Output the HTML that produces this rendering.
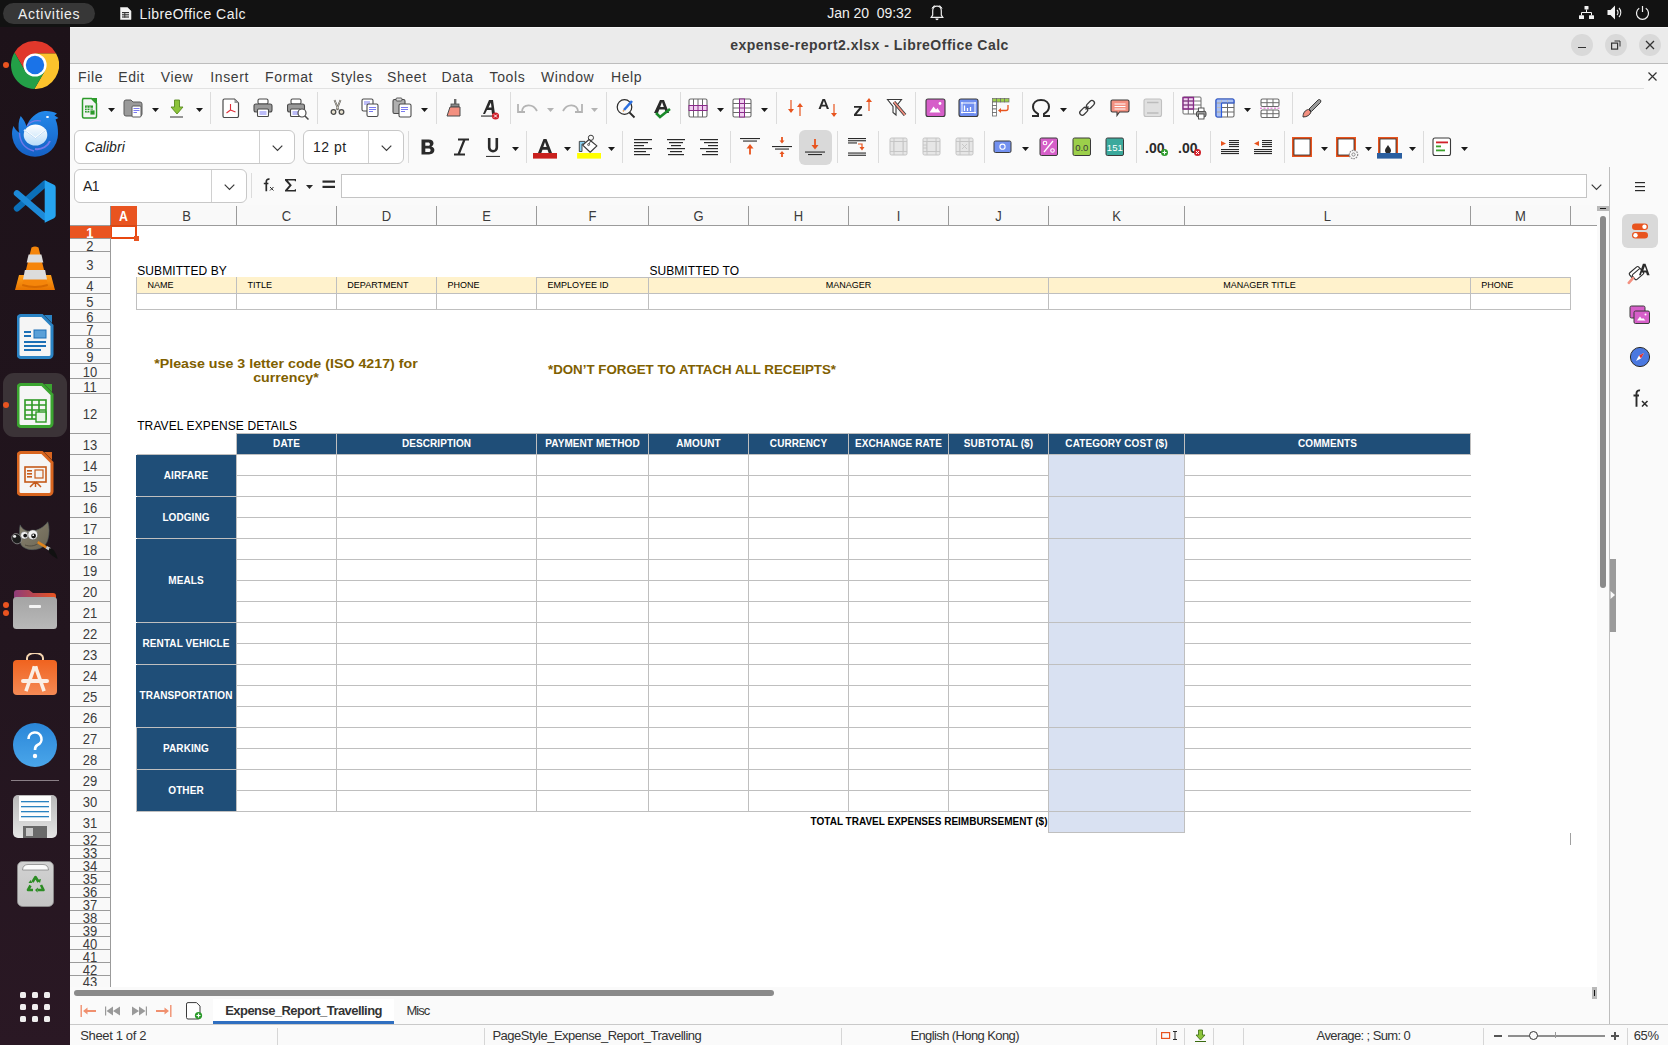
<!DOCTYPE html><html><head><meta charset="utf-8"><style>html,body{margin:0;padding:0;}body{width:1668px;height:1045px;overflow:hidden;position:relative;background:#fafafa;font-family:"Liberation Sans",sans-serif;}</style></head><body>
<div style="position:absolute;left:0px;top:0px;width:1668px;height:27px;background:#121212"></div>
<div style="position:absolute;left:3px;top:3px;width:92px;height:21px;background:#373737;border-radius:11px"></div>
<div style="position:absolute;left:18px;top:7.15px;font:normal normal 14px/14px 'Liberation Sans',sans-serif;color:#f0f0f0;letter-spacing:0.7px;white-space:nowrap;">Activities</div>
<svg style="position:absolute;left:119px;top:7px" width="13" height="13" viewBox="0 0 13 13"><path d="M1.5 0.5h7l3.5 3.5v8.5h-10.5z" fill="#f4f4f4" stroke="#ddd" stroke-width="0.6"/><g fill="#333"><rect x="3" y="5" width="7" height="1.2"/><rect x="3" y="7.2" width="7" height="1.2"/><rect x="3" y="9.4" width="7" height="1.2"/><rect x="5.3" y="5" width="1" height="5.6"/></g></svg>
<div style="position:absolute;left:139.4px;top:7.15px;font:normal normal 14px/14px 'Liberation Sans',sans-serif;color:#f0f0f0;letter-spacing:0.45px;white-space:nowrap;">LibreOffice Calc</div>
<div style="position:absolute;left:827.3px;top:6.15px;font:normal normal 14px/14px 'Liberation Sans',sans-serif;color:#f0f0f0;letter-spacing:-0.05px;white-space:nowrap;">Jan 20&nbsp;&nbsp;09:32</div>
<svg style="position:absolute;left:930px;top:4px" width="14" height="18" viewBox="0 0 14 18"><path d="M7 2.2c-2.6 0-4.3 2-4.3 4.6v4.3L1.2 13.4h11.6l-1.5-2.3V6.8C11.3 4.2 9.6 2.2 7 2.2z" fill="none" stroke="#eee" stroke-width="1.2"/><path d="M5.4 14.6h3.2a1.6 1.6 0 0 1-3.2 0z" fill="#eee"/><path d="M2 4.5a6 6 0 0 1 2.5-3M12 4.5a6 6 0 0 0-2.5-3" fill="none" stroke="#eee" stroke-width="1"/></svg>
<svg style="position:absolute;left:1579px;top:6px" width="15" height="13" viewBox="0 0 15 13"><g fill="#f2f2f2"><rect x="5.5" y="0" width="4" height="3.5" rx="0.6"/><rect x="0" y="9.3" width="5" height="3.7" rx="0.6"/><rect x="10" y="9.3" width="5" height="3.7" rx="0.6"/></g><path d="M7.5 3.5v3M2.5 9.3V6.5h10v2.8" fill="none" stroke="#f2f2f2" stroke-width="1"/></svg>
<svg style="position:absolute;left:1607px;top:5px" width="16" height="15" viewBox="0 0 16 15"><path d="M0.5 5h3l4.5-4.5v14L3.5 10h-3z" fill="#f2f2f2"/><path d="M10 5a3.5 3.5 0 0 1 0 5M12 3a6.5 6.5 0 0 1 0 9" fill="none" stroke="#f2f2f2" stroke-width="1.1"/></svg>
<svg style="position:absolute;left:1635px;top:5px" width="15" height="15" viewBox="0 0 15 15"><path d="M4.2 3.3a6 6 0 1 0 6.6 0" fill="none" stroke="#f2f2f2" stroke-width="1.2"/><path d="M7.5 1v6" stroke="#f2f2f2" stroke-width="1.2"/></svg>
<div style="position:absolute;left:0;top:27px;width:70px;height:1018px;background:linear-gradient(180deg,#1d1219 0%,#22151e 60%,#2a1824 100%)"></div>
<svg style="position:absolute;left:11px;top:41px" width="48" height="48" viewBox="0 0 48 48"><path d="M3.51 11.5 A24 24 0 0 1 45.07 12.5 L24 12.5 L24 24 L14.04 29.75Z" fill="#e0382b"/>
<path d="M45.07 12.5 A24 24 0 0 1 23.4 48 L33.96 29.75 L24 24 L24 12.5Z" fill="#fcc32c"/>
<path d="M23.4 48 A24 24 0 0 1 3.51 11.5 L14.04 29.75 L24 24 L33.96 29.75Z" fill="#23a047"/>
<circle cx="24" cy="24" r="11.6" fill="#fff"/><circle cx="24" cy="24" r="9.2" fill="#1a73e8"/></svg>
<div style="position:absolute;left:3px;top:62px;width:6px;height:6px;border-radius:3px;background:#e95420"></div>
<svg style="position:absolute;left:11px;top:110px" width="48" height="47" viewBox="0 0 48 47"><defs><linearGradient id="tb" x1="0" y1="0" x2="0" y2="1"><stop offset="0" stop-color="#2389ea"/><stop offset="1" stop-color="#1560c4"/></linearGradient><linearGradient id="env" x1="0" y1="0" x2="0" y2="1"><stop offset="0" stop-color="#ffffff"/><stop offset="1" stop-color="#b9dcf8"/></linearGradient></defs>
<path d="M24 46.8 A23 23 0 0 1 1 24 C1 21 1.5 18.5 2.5 16 C4 19 5.5 21 8 22.5 C7 16 7.5 10.5 9.7 5.9 C12.5 9 14.5 12.5 15.5 16.5 C18 9 25 1.5 34 1 C39 0.8 43 2 46 3.5 L43.5 5.5 L47.5 8 L44.5 9.5 C46.5 13.5 47 18.5 47 24 A23 23 0 0 1 24 46.8Z" fill="url(#tb)"/>
<ellipse cx="36.5" cy="7" rx="1.5" ry="1" fill="#fff"/>
<path d="M16 16 C19 12 24 10 30 11" stroke="#8e7ce8" stroke-width="1.2" fill="none" opacity="0.8"/>
<path d="M8.5 23 C9 33 15 39 23 41" stroke="#8b7df0" stroke-width="1.4" fill="none" opacity="0.75"/>
<ellipse cx="24.5" cy="25" rx="11.8" ry="10.5" fill="url(#env)"/>
<path d="M13 20 L24.5 28 L35 20" stroke="#ffffff" stroke-width="1.6" fill="none"/>
<path d="M13.5 20.5 L24.5 28.5 L34.5 20.5" stroke="#9cc8f0" stroke-width="0.7" fill="none"/>
<path d="M24 39 C31 40 37 36 39 31" stroke="#8b7df0" stroke-width="2" fill="none" opacity="0.8"/></svg>
<svg style="position:absolute;left:13px;top:180px" width="44" height="43" viewBox="0 0 44 43"><path d="M4 28.3 L31.7 4" stroke="#0b6fb8" stroke-width="6.4" stroke-linecap="round"/>
<path d="M4 13.4 L31.7 37" stroke="#1d8ad8" stroke-width="6.4" stroke-linecap="round"/>
<path d="M31.7 0.3 L41 4.8 Q42.7 5.6 42.7 7.5 V35.5 Q42.7 37.4 41 38.2 L31.7 42.7Z" fill="#26a4f0"/></svg>
<svg style="position:absolute;left:15px;top:246px" width="40" height="46" viewBox="0 0 40 46"><defs><linearGradient id="vb" x1="0" y1="0" x2="0" y2="1"><stop offset="0" stop-color="#ffa01a"/><stop offset="1" stop-color="#e87400"/></linearGradient></defs>
<path d="M4 29 H36 L40 44 H0Z" fill="url(#vb)"/>
<path d="M16.5 1.5 Q20 -0.5 23.5 1.5 L32.5 38 Q20 42 7.5 38Z" fill="#f5850a"/>
<path d="M13.6 8.5 H26.4 L28.3 16.5 H11.7Z" fill="#dcdcdc"/>
<path d="M9.9 24 H30.1 L32 33.5 H8Z" fill="#dcdcdc"/>
<path d="M7.5 38 Q20 42 32.5 38 L33 40 Q20 44 7 40Z" fill="#d86a00"/></svg>
<svg style="position:absolute;left:17px;top:314px" width="37" height="45" viewBox="0 0 37 45"><path d="M4 1.5 h21 l10 10 v29 a3 3 0 0 1 -3 3 h-28 a3 3 0 0 1 -3 -3 v-36 a3 3 0 0 1 3 -3z" fill="#f5f5f5" stroke="#2a83c4" stroke-width="3"/>
<path d="M27 1 h8 v8z" fill="#2a83c4"/><g fill="#1c6fb5"><rect x="7" y="17" width="7" height="2"/><rect x="7" y="21" width="7" height="2"/><rect x="7" y="27" width="22" height="2"/><rect x="7" y="31" width="22" height="2"/><rect x="7" y="35" width="17" height="2"/></g><rect x="17" y="16" width="12" height="8" fill="#5aa0d8" stroke="#1c6fb5"/></svg>
<div style="position:absolute;left:3px;top:373px;width:64px;height:64px;background:#3b3337;border-radius:11px"></div>
<svg style="position:absolute;left:17px;top:383px" width="37" height="45" viewBox="0 0 37 45"><path d="M4 1.5 h21 l10 10 v29 a3 3 0 0 1 -3 3 h-28 a3 3 0 0 1 -3 -3 v-36 a3 3 0 0 1 3 -3z" fill="#f5f5f5" stroke="#3ba530" stroke-width="3"/>
<path d="M27 1 h8 v8z" fill="#3ba530"/><g fill="none" stroke="#2f9a26" stroke-width="1.6"><rect x="8" y="17" width="21" height="19"/><path d="M8 22h21M8 27h21M8 32h21M15 17v19M22 17v19"/></g><rect x="19" y="29" width="10" height="10" fill="#e8f5e6" stroke="#2f9a26" stroke-width="1.4"/></svg>
<div style="position:absolute;left:3px;top:402px;width:6px;height:6px;border-radius:3px;background:#e95420"></div>
<svg style="position:absolute;left:17px;top:451px" width="37" height="45" viewBox="0 0 37 45"><path d="M4 1.5 h21 l10 10 v29 a3 3 0 0 1 -3 3 h-28 a3 3 0 0 1 -3 -3 v-36 a3 3 0 0 1 3 -3z" fill="#f5f5f5" stroke="#d8651f" stroke-width="3"/>
<path d="M27 1 h8 v8z" fill="#d8651f"/><rect x="8" y="16" width="21" height="15" fill="none" stroke="#c55a1a" stroke-width="1.6"/><g fill="#c55a1a"><rect x="10" y="19" width="5" height="1.6"/><rect x="10" y="22" width="5" height="1.6"/><rect x="10" y="25" width="5" height="1.6"/></g><rect x="18" y="19" width="8" height="8" fill="none" stroke="#c55a1a" stroke-width="1.2"/><path d="M18 31 l-5 5 M18.5 31 v5 M19 31 l5 5" stroke="#c55a1a" stroke-width="1.5"/></svg>
<svg style="position:absolute;left:11px;top:518px" width="48" height="42" viewBox="0 0 48 42"><defs><linearGradient id="gh" x1="0" y1="0" x2="1" y2="1"><stop offset="0" stop-color="#8a8470"/><stop offset="1" stop-color="#6a6454"/></linearGradient></defs>
<path d="M9.2 6.9 C11 11 15 13.5 19.8 13.2 C27 12.8 33 9 36.8 3.8 C38.5 9 38.5 16 37 21 C36 26 32 30.5 24 31.6 C17 32 12 30 10 26.4 C8.5 22 8 12 9.2 6.9Z" fill="url(#gh)" stroke="#4e5a5a" stroke-width="0.6"/>
<path d="M14 27 C18 28.5 23 28.5 27 25.5" stroke="#4a4538" stroke-width="0.8" fill="none"/>
<ellipse cx="5.6" cy="20.7" rx="4.6" ry="5.4" transform="rotate(-35 5.6 20.7)" fill="#1c1c1c" stroke="#9a9a9a" stroke-width="0.7"/>
<ellipse cx="3.6" cy="18.4" rx="1.6" ry="1.4" fill="#f0f0f0"/>
<circle cx="13.4" cy="17.3" r="3.8" fill="#f2f2f2" stroke="#555" stroke-width="0.5"/><circle cx="14.2" cy="17.6" r="1.9" fill="#151515"/>
<circle cx="21.8" cy="16.8" r="4.9" fill="#f2f2f2" stroke="#555" stroke-width="0.5"/><circle cx="22.6" cy="18" r="2.4" fill="#151515"/><circle cx="22.2" cy="17.2" r="0.9" fill="#fff"/>
<path d="M26.7 24.1 L35.3 29.3" stroke="#e0841c" stroke-width="2.6"/>
<path d="M35.3 29.3 L39.4 31.6" stroke="#c8c8c8" stroke-width="3"/>
<path d="M38.5 30 C43 31 45.5 35 46.5 41 C42 38.5 38 35.5 37.5 33Z" fill="#111"/></svg>
<svg style="position:absolute;left:12px;top:589px" width="46" height="40" viewBox="0 0 46 40"><defs><linearGradient id="fo" x1="0" y1="0" x2="1" y2="0"><stop offset="0" stop-color="#8e3c7a"/><stop offset="1" stop-color="#e95420"/></linearGradient><linearGradient id="fg" x1="0" y1="0" x2="0" y2="1"><stop offset="0" stop-color="#a4a4a4"/><stop offset="1" stop-color="#b9b9b9"/></linearGradient></defs>
<path d="M2 4 a3 3 0 0 1 3 -3 h12 l4 3 h20 a3 3 0 0 1 3 3 v6 h-42z" fill="url(#fo)"/>
<rect x="1" y="8" width="44" height="32" rx="3.5" fill="url(#fg)"/><rect x="17" y="16" width="12" height="3" rx="1" fill="#f4f4f4"/></svg>
<div style="position:absolute;left:3px;top:602px;width:6px;height:6px;border-radius:3px;background:#e95420"></div>
<div style="position:absolute;left:3px;top:610px;width:6px;height:6px;border-radius:3px;background:#e95420"></div>
<svg style="position:absolute;left:12px;top:653px" width="46" height="42" viewBox="0 0 46 42"><defs><linearGradient id="ac" x1="0" y1="0" x2="0" y2="1"><stop offset="0" stop-color="#f0631f"/><stop offset="1" stop-color="#f58a55"/></linearGradient></defs>
<path d="M15 8 v-3 a8 5 0 0 1 16 0 v3" fill="none" stroke="#f5d5b0" stroke-width="2"/>
<rect x="1" y="7" width="44" height="35" rx="4" fill="url(#ac)"/>
<path d="M14.5 36.5 L22 15 M24 15 L31.5 36.5" stroke="#fbeee4" stroke-width="3.6" stroke-linecap="square"/><rect x="20.5" y="13.5" width="5" height="3" fill="#fbeee4"/><rect x="9" y="26" width="28" height="4" rx="2" fill="#fbeee4"/></svg>
<svg style="position:absolute;left:12px;top:722px" width="46" height="46" viewBox="0 0 46 46"><defs><linearGradient id="hp" x1="0" y1="0" x2="0" y2="1"><stop offset="0" stop-color="#2a86d8"/><stop offset="1" stop-color="#4aa6ea"/></linearGradient></defs>
<circle cx="23" cy="23" r="22" fill="url(#hp)"/>
<path d="M16.5 17 a6.5 6.5 0 1 1 9 6 c-2 1 -2.5 2.5 -2.5 5" fill="none" stroke="#fff" stroke-width="2.6"/><circle cx="23" cy="34" r="2.2" fill="#fff"/></svg>
<div style="position:absolute;left:11px;top:780px;width:48px;height:1px;background:#8a7f86"></div>
<svg style="position:absolute;left:12px;top:794px" width="46" height="45" viewBox="0 0 46 45"><defs><linearGradient id="fl" x1="0" y1="0" x2="0" y2="1"><stop offset="0" stop-color="#b9b9b9"/><stop offset="1" stop-color="#e6e6e6"/></linearGradient></defs>
<rect x="1" y="1" width="44" height="43" rx="5" fill="url(#fl)"/><rect x="7" y="2" width="32" height="25" fill="#fdfdfd"/>
<g fill="#2a82c0"><rect x="9" y="7" width="28" height="1.3"/><rect x="9" y="12" width="28" height="1.3"/><rect x="9" y="17" width="28" height="1.3"/><rect x="9" y="22" width="28" height="1.3"/></g>
<rect x="11" y="32" width="24" height="12" fill="#6a6a6a"/><rect x="14" y="34" width="7" height="8" fill="#c9c9c9"/></svg>
<svg style="position:absolute;left:17px;top:861px" width="37" height="46" viewBox="0 0 37 46"><defs><linearGradient id="tr" x1="0" y1="0" x2="0" y2="1"><stop offset="0" stop-color="#d2d2d2"/><stop offset="1" stop-color="#c4c4c4"/></linearGradient></defs>
<rect x="0.5" y="0.5" width="36" height="45" rx="5" fill="url(#tr)" stroke="#8e8e8e" stroke-width="0.8"/>
<path d="M5.5 9 Q6 3.5 11 3.5 H26 Q31 3.5 31.5 9Z" fill="#fbfbfb" stroke="#7a7a7a" stroke-width="0.7"/>
<g fill="none" stroke="#2c8c24" stroke-width="2.6" stroke-linejoin="round">
<path d="M15.5 21 L18.5 16 L21.5 21"/><path d="M24 24 L26.5 29 H21"/><path d="M16 29 H11 L13.5 24.5"/></g>
<g fill="#2c8c24"><path d="M20 19 l4 -1 l-1 4z"/><path d="M20.5 31.5 l-2.5 -2.5 l3 -2.5z"/><path d="M11.5 22 l2 -3 l2 3z"/></g></svg>
<div style="position:absolute;left:20px;top:992px;width:6px;height:6px;background:#eeeeee;border-radius:1.5px"></div>
<div style="position:absolute;left:20px;top:1004px;width:6px;height:6px;background:#eeeeee;border-radius:1.5px"></div>
<div style="position:absolute;left:20px;top:1016px;width:6px;height:6px;background:#eeeeee;border-radius:1.5px"></div>
<div style="position:absolute;left:32px;top:992px;width:6px;height:6px;background:#eeeeee;border-radius:1.5px"></div>
<div style="position:absolute;left:32px;top:1004px;width:6px;height:6px;background:#eeeeee;border-radius:1.5px"></div>
<div style="position:absolute;left:32px;top:1016px;width:6px;height:6px;background:#eeeeee;border-radius:1.5px"></div>
<div style="position:absolute;left:44px;top:992px;width:6px;height:6px;background:#eeeeee;border-radius:1.5px"></div>
<div style="position:absolute;left:44px;top:1004px;width:6px;height:6px;background:#eeeeee;border-radius:1.5px"></div>
<div style="position:absolute;left:44px;top:1016px;width:6px;height:6px;background:#eeeeee;border-radius:1.5px"></div>
<div style="position:absolute;left:70px;top:27px;width:1598px;height:1px;background:#f6f6f6"></div>
<div style="position:absolute;left:70px;top:28px;width:1598px;height:35px;background:#ebebeb"></div>
<div style="position:absolute;left:70px;top:63px;width:1598px;height:1px;background:#bdbdbd"></div>
<div style="position:absolute;left:700px;width:339px;top:38.15px;text-align:center;font:normal bold 14px/14px 'Liberation Sans',sans-serif;color:#3d3d3d;letter-spacing:0.48px;white-space:nowrap;">expense-report2.xlsx - LibreOffice Calc</div>
<div style="position:absolute;left:1571px;top:34px;width:22px;height:22px;background:#d9d9d9;border-radius:11px"></div>
<div style="position:absolute;left:1605px;top:34px;width:22px;height:22px;background:#d9d9d9;border-radius:11px"></div>
<div style="position:absolute;left:1639px;top:34px;width:22px;height:22px;background:#d9d9d9;border-radius:11px"></div>
<div style="position:absolute;left:1578px;top:47px;width:8px;height:1.2px;background:#333"></div>
<svg style="position:absolute;left:1611px;top:40px" width="10" height="10" viewBox="0 0 10 10"><rect x="0.6" y="3.1" width="6" height="6" fill="none" stroke="#333" stroke-width="1.2"/><path d="M3.5 1 h5.5 v5.5" fill="none" stroke="#333" stroke-width="1"/></svg>
<svg style="position:absolute;left:1645px;top:40px" width="10" height="10" viewBox="0 0 10 10"><path d="M1 1 L9 9 M9 1 L1 9" stroke="#333" stroke-width="1.3"/></svg>
<div style="position:absolute;left:70px;top:64px;width:1598px;height:24px;background:#fafafa"></div>
<div style="position:absolute;left:70px;top:88px;width:1574px;height:1px;background:#e2e2e2"></div>
<div style="position:absolute;left:78.1px;top:69.95px;font:normal normal 14px/14px 'Liberation Sans',sans-serif;color:#3c3c3c;letter-spacing:0.6px;white-space:nowrap;">File</div>
<div style="position:absolute;left:118.2px;top:69.95px;font:normal normal 14px/14px 'Liberation Sans',sans-serif;color:#3c3c3c;letter-spacing:0.6px;white-space:nowrap;">Edit</div>
<div style="position:absolute;left:160.8px;top:69.95px;font:normal normal 14px/14px 'Liberation Sans',sans-serif;color:#3c3c3c;letter-spacing:0.6px;white-space:nowrap;">View</div>
<div style="position:absolute;left:210.3px;top:69.95px;font:normal normal 14px/14px 'Liberation Sans',sans-serif;color:#3c3c3c;letter-spacing:0.6px;white-space:nowrap;">Insert</div>
<div style="position:absolute;left:265.1px;top:69.95px;font:normal normal 14px/14px 'Liberation Sans',sans-serif;color:#3c3c3c;letter-spacing:0.6px;white-space:nowrap;">Format</div>
<div style="position:absolute;left:330.8px;top:69.95px;font:normal normal 14px/14px 'Liberation Sans',sans-serif;color:#3c3c3c;letter-spacing:0.6px;white-space:nowrap;">Styles</div>
<div style="position:absolute;left:387.1px;top:69.95px;font:normal normal 14px/14px 'Liberation Sans',sans-serif;color:#3c3c3c;letter-spacing:0.6px;white-space:nowrap;">Sheet</div>
<div style="position:absolute;left:441.6px;top:69.95px;font:normal normal 14px/14px 'Liberation Sans',sans-serif;color:#3c3c3c;letter-spacing:0.6px;white-space:nowrap;">Data</div>
<div style="position:absolute;left:489.6px;top:69.95px;font:normal normal 14px/14px 'Liberation Sans',sans-serif;color:#3c3c3c;letter-spacing:0.6px;white-space:nowrap;">Tools</div>
<div style="position:absolute;left:540.9px;top:69.95px;font:normal normal 14px/14px 'Liberation Sans',sans-serif;color:#3c3c3c;letter-spacing:0.6px;white-space:nowrap;">Window</div>
<div style="position:absolute;left:611px;top:69.95px;font:normal normal 14px/14px 'Liberation Sans',sans-serif;color:#3c3c3c;letter-spacing:0.6px;white-space:nowrap;">Help</div>
<svg style="position:absolute;left:1648px;top:72px" width="9" height="9" viewBox="0 0 9 9"><path d="M0.5 0.5 L8.5 8.5 M8.5 0.5 L0.5 8.5" stroke="#333" stroke-width="1.2"/></svg>
<div style="position:absolute;left:70px;top:89px;width:1539px;height:80px;background:#fafafa"></div>
<svg style="position:absolute;left:80px;top:97px" width="18" height="22" viewBox="0 0 18 22"><path d="M2.5 1.5 h9 l5 5 v13 a1.5 1.5 0 0 1 -1.5 1.5 h-11 a1.5 1.5 0 0 1 -1.5 -1.5 v-16.5 a1.5 1.5 0 0 1 1.5 -1.5z" fill="#f4f4f4" stroke="#2c9a2a" stroke-width="1.5"/><path d="M11.5 1 h5.5 v5.5z" fill="#2c9a2a"/><g fill="#2c9a2a"><rect x="5" y="8.5" width="8" height="7"/></g><g fill="#f4f4f4"><rect x="6.7" y="9.3" width="0.8" height="6"/><rect x="9.6" y="9.3" width="0.8" height="6"/><rect x="5" y="10.8" width="8" height="0.8"/><rect x="5" y="13" width="8" height="0.8"/></g><rect x="10" y="13" width="5" height="5" fill="#2c9a2a" stroke="#f4f4f4" stroke-width="0.8"/></svg>
<svg style="position:absolute;left:108px;top:108px" width="7" height="4" viewBox="0 0 7 4"><path d="M0 0 h7 l-3.5 4z" fill="#1a1a1a"/></svg>
<svg style="position:absolute;left:123px;top:99px" width="20" height="19" viewBox="0 0 20 19"><path d="M1 3 a2 2 0 0 1 2 -2 h5 l2 2 h7 a2 2 0 0 1 2 2 v10 a2 2 0 0 1 -2 2 h-14 a2 2 0 0 1 -2 -2z" fill="#9a9a9a" stroke="#5a5a5a" stroke-width="1"/><rect x="9" y="7" width="9" height="11" rx="1" fill="#fff" stroke="#5a5a5a" stroke-width="1"/><g fill="#7b7bf0"><rect x="10.5" y="9" width="6" height="1"/><rect x="10.5" y="11" width="6" height="1"/><rect x="10.5" y="13" width="3.5" height="1"/></g></svg>
<svg style="position:absolute;left:152px;top:108px" width="7" height="4" viewBox="0 0 7 4"><path d="M0 0 h7 l-3.5 4z" fill="#1a1a1a"/></svg>
<svg style="position:absolute;left:170px;top:99px" width="14" height="19" viewBox="0 0 14 19"><path d="M4.5 1 h5 v7 h3.5 l-6 7 l-6 -7 h3.5z" fill="#8cc43a" stroke="#5a8a20" stroke-width="0.9"/><rect x="0" y="17.4" width="13" height="1.2" fill="#555"/></svg>
<svg style="position:absolute;left:196px;top:108px" width="7" height="4" viewBox="0 0 7 4"><path d="M0 0 h7 l-3.5 4z" fill="#1a1a1a"/></svg>
<div style="position:absolute;left:210px;top:92px;width:1px;height:32px;background:#dcdcdc"></div>
<svg style="position:absolute;left:222px;top:98px" width="18" height="20" viewBox="0 0 18 20"><path d="M2.5 1 h10 l4 4 v13 a1.5 1.5 0 0 1 -1.5 1.5 h-12.5 a1.5 1.5 0 0 1 -1.5 -1.5 v-15.5 a1.5 1.5 0 0 1 1.5 -1.5z" fill="#fff" stroke="#4a4a4a" stroke-width="1.2"/><path d="M12.5 1 v4 h4z" fill="#9a9a9a"/><path d="M8.5 6 v6 M8.5 12 l-4 3 M8.5 12 l5 2" stroke="#e0303a" stroke-width="1.1" fill="none"/></svg>
<svg style="position:absolute;left:253px;top:98px" width="20" height="20" viewBox="0 0 20 20"><rect x="5" y="1" width="10" height="5" rx="1.5" fill="#fff" stroke="#4a4a4a" stroke-width="1.1"/><rect x="1" y="6" width="18" height="8" rx="2" fill="#9a9a9a" stroke="#4a4a4a" stroke-width="1.1"/><rect x="4.5" y="11" width="11" height="7.5" rx="1" fill="#fff" stroke="#4a4a4a" stroke-width="1.1"/><g fill="#7b7bf0"><rect x="6.5" y="13.5" width="7" height="1"/><rect x="6.5" y="15.5" width="7" height="1"/></g></svg>
<svg style="position:absolute;left:287px;top:98px" width="23" height="23" viewBox="0 0 23 23"><rect x="4" y="1" width="10" height="5" rx="1.5" fill="#fff" stroke="#4a4a4a" stroke-width="1.1"/><rect x="0.5" y="6" width="17" height="8" rx="2" fill="#9a9a9a" stroke="#4a4a4a" stroke-width="1.1"/><rect x="3.5" y="11" width="10" height="7.5" rx="1" fill="#fff" stroke="#4a4a4a" stroke-width="1.1"/><g fill="#7b7bf0"><rect x="5.5" y="13.5" width="6" height="1"/><rect x="5.5" y="15.5" width="6" height="1"/></g><circle cx="15" cy="15" r="4" fill="#fff" stroke="#4a4a4a" stroke-width="1.2"/><path d="M18 18 l3.5 3.5" stroke="#4a4a4a" stroke-width="1.5"/></svg>
<div style="position:absolute;left:317px;top:92px;width:1px;height:32px;background:#dcdcdc"></div>
<svg style="position:absolute;left:330px;top:99px" width="15" height="17" viewBox="0 0 15 17"><path d="M4.5 1 l4 10 M10.5 1 l-4 10" stroke="#4a4a4a" stroke-width="1.8" fill="none"/><path d="M4.5 1 l4 10 M10.5 1 l-4 10" stroke="#e8e2d0" stroke-width="0.7" fill="none"/><circle cx="3.5" cy="13" r="2.3" fill="#e8e2d0" stroke="#4a4a4a" stroke-width="1.3"/><circle cx="11.5" cy="13" r="2.3" fill="#e8e2d0" stroke="#4a4a4a" stroke-width="1.3"/></svg>
<svg style="position:absolute;left:361px;top:98px" width="19" height="20" viewBox="0 0 19 20"><rect x="1" y="1" width="11" height="12" rx="1.5" fill="#fff" stroke="#4a4a4a" stroke-width="1.1"/><g fill="#7b7bf0"><rect x="3" y="3.5" width="6" height="1"/><rect x="3" y="5.5" width="6" height="1"/></g><rect x="6" y="6" width="11" height="12.5" rx="1.5" fill="#fff" stroke="#4a4a4a" stroke-width="1.1"/><g fill="#7b7bf0"><rect x="8" y="9" width="7" height="1"/><rect x="8" y="11" width="7" height="1"/><rect x="8" y="13" width="4" height="1"/></g></svg>
<svg style="position:absolute;left:392px;top:97px" width="20" height="21" viewBox="0 0 20 21"><rect x="1" y="2.5" width="12" height="14" rx="1.5" fill="#b0b0b0" stroke="#4a4a4a" stroke-width="1.1"/><rect x="4" y="1" width="6" height="3" rx="1" fill="#ddd" stroke="#4a4a4a" stroke-width="0.9"/><rect x="7" y="7" width="12" height="13" rx="1.5" fill="#fff" stroke="#4a4a4a" stroke-width="1.1"/><g fill="#7b7bf0"><rect x="9" y="10" width="7" height="1"/><rect x="9" y="12" width="7" height="1"/><rect x="9" y="14" width="4" height="1"/></g></svg>
<svg style="position:absolute;left:421px;top:108px" width="7" height="4" viewBox="0 0 7 4"><path d="M0 0 h7 l-3.5 4z" fill="#1a1a1a"/></svg>
<div style="position:absolute;left:436px;top:92px;width:1px;height:32px;background:#dcdcdc"></div>
<svg style="position:absolute;left:446px;top:98px" width="17" height="20" viewBox="0 0 17 20"><rect x="8" y="1" width="2.4" height="6" fill="#6a6a6a"/><rect x="5" y="6" width="8" height="3" fill="#8a8a8a" stroke="#4a4a4a" stroke-width="0.8"/><path d="M4 9 h10 l0 9 h-13z" fill="#f39080" stroke="#4a4a4a" stroke-width="1"/></svg>
<svg style="position:absolute;left:481px;top:98px" width="19" height="22" viewBox="0 0 19 22"><path d="M2 16 L8 2 h4 l2 14 h-3 l-0.5 -4 h-4.5 l-2 4z M7.5 9.5 h3 l-0.6 -5z" fill="#2a2a2a" fill-rule="evenodd"/><rect x="0" y="17.5" width="11" height="1.1" fill="#2a2a2a"/><circle cx="14.5" cy="18" r="3.6" fill="#d0202a"/><path d="M13 16.5 l3 3 M16 16.5 l-3 3" stroke="#fff" stroke-width="1"/></svg>
<div style="position:absolute;left:510px;top:92px;width:1px;height:32px;background:#dcdcdc"></div>
<svg style="position:absolute;left:517px;top:102px" width="22" height="11" viewBox="0 0 22 11"><path d="M5 9 C6 2 16 1 20 9" fill="none" stroke="#b4b4b4" stroke-width="1.8"/><path d="M1 2 v8 h7" fill="none" stroke="#b4b4b4" stroke-width="1.8"/></svg>
<svg style="position:absolute;left:547px;top:108px" width="7" height="4" viewBox="0 0 7 4"><path d="M0 0 h7 l-3.5 4z" fill="#b4b4b4"/></svg>
<svg style="position:absolute;left:561px;top:102px" width="22" height="11" viewBox="0 0 22 11"><path d="M17 9 C16 2 6 1 2 9" fill="none" stroke="#b4b4b4" stroke-width="1.8"/><path d="M21 2 v8 h-7" fill="none" stroke="#b4b4b4" stroke-width="1.8"/></svg>
<svg style="position:absolute;left:591px;top:108px" width="7" height="4" viewBox="0 0 7 4"><path d="M0 0 h7 l-3.5 4z" fill="#b4b4b4"/></svg>
<div style="position:absolute;left:606px;top:92px;width:1px;height:32px;background:#dcdcdc"></div>
<svg style="position:absolute;left:616px;top:98px" width="21" height="21" viewBox="0 0 21 21"><circle cx="8.5" cy="9" r="7.3" fill="none" stroke="#2a2a2a" stroke-width="1.2"/><path d="M13.5 14.5 l5 5" stroke="#2a2a2a" stroke-width="1.8"/><path d="M8 12 l8 -9" stroke="#2a6fe0" stroke-width="2.6"/><path d="M8 12 l-1 1.5" stroke="#e0a060" stroke-width="1.4"/></svg>
<svg style="position:absolute;left:652px;top:98px" width="20" height="22" viewBox="0 0 20 22"><path d="M2 15 L8 2 h4 l5 13 h-3 l-1.3 -3.5 h-5.4 l-1.3 3.5z M8.2 9 h3.6 l-1.8 -5z" fill="#2a2a2a" fill-rule="evenodd"/><path d="M4 15 l4 4 l10 -8" fill="none" stroke="#1a8a2a" stroke-width="2.6"/></svg>
<div style="position:absolute;left:680px;top:92px;width:1px;height:32px;background:#dcdcdc"></div>
<svg style="position:absolute;left:688px;top:98px" width="20" height="20" viewBox="0 0 20 20"><rect x="1" y="1" width="18" height="18" rx="1.5" fill="#fff" stroke="#6a6a6a" stroke-width="1.1"/><path d="M5.5 1v18M10 1v18M14.5 1v18" stroke="#6a6a6a" stroke-width="1"/><rect x="1" y="7.5" width="18" height="5" fill="#f0d0f0" stroke="#8a2a8a" stroke-width="1"/><path d="M5.5 7.5v5M10 7.5v5M14.5 7.5v5" stroke="#8a2a8a" stroke-width="1"/></svg>
<svg style="position:absolute;left:717px;top:108px" width="7" height="4" viewBox="0 0 7 4"><path d="M0 0 h7 l-3.5 4z" fill="#1a1a1a"/></svg>
<svg style="position:absolute;left:732px;top:98px" width="20" height="20" viewBox="0 0 20 20"><rect x="1" y="1" width="18" height="18" rx="1.5" fill="#fff" stroke="#6a6a6a" stroke-width="1.1"/><path d="M1 5.5h18M1 10h18M1 14.5h18" stroke="#6a6a6a" stroke-width="1"/><rect x="7.5" y="1" width="5" height="18" fill="#f0d0f0" stroke="#8a2a8a" stroke-width="1"/><path d="M7.5 5.5h5M7.5 10h5M7.5 14.5h5" stroke="#8a2a8a" stroke-width="1"/></svg>
<svg style="position:absolute;left:761px;top:108px" width="7" height="4" viewBox="0 0 7 4"><path d="M0 0 h7 l-3.5 4z" fill="#1a1a1a"/></svg>
<div style="position:absolute;left:776px;top:92px;width:1px;height:32px;background:#dcdcdc"></div>
<svg style="position:absolute;left:788px;top:99px" width="16" height="18" viewBox="0 0 16 18"><path d="M3 1 v12" stroke="#e8541e" stroke-width="1.2"/><path d="M0 10 l3 4 l3 -4z" fill="#e8541e"/><path d="M12 17 v-11" stroke="#e8541e" stroke-width="1.2"/><path d="M9 8 l3 -4 l3 4z" fill="#e8541e"/></svg>
<svg style="position:absolute;left:818px;top:98px" width="21" height="20" viewBox="0 0 21 20"><path d="M0.5 11 L4.5 1 h2.5 l4 10 h-2.2 l-0.9 -2.5 h-4.3 l-0.9 2.5z M4.4 6.8 h3 l-1.5 -4z" fill="#2a2a2a" fill-rule="evenodd"/><path d="M16 6 v12" stroke="#e8541e" stroke-width="1.2"/><path d="M13 15 l3 4 l3 -4z" fill="#e8541e"/></svg>
<svg style="position:absolute;left:853px;top:98px" width="20" height="20" viewBox="0 0 20 20"><path d="M1 8 h8 v1.8 l-5.3 6.4 h5.5 v1.8 h-8.2 v-1.8 l5.3 -6.4 h-5.3z" fill="#2a2a2a"/><path d="M16 13 v-11" stroke="#e8541e" stroke-width="1.2"/><path d="M13 4 l3 -4 l3 4z" fill="#e8541e"/></svg>
<svg style="position:absolute;left:886px;top:98px" width="21" height="20" viewBox="0 0 21 20"><path d="M1.5 1.5 h14 l-5.5 7 v8.5 l-3 -2.5 v-6z" fill="#fff" stroke="#3a3a3a" stroke-width="1.1"/><path d="M8 4 l11 13" stroke="#3a3a3a" stroke-width="3.4"/><path d="M8 4 l11 13" stroke="#f39080" stroke-width="1.8"/></svg>
<div style="position:absolute;left:915px;top:92px;width:1px;height:32px;background:#dcdcdc"></div>
<svg style="position:absolute;left:925px;top:98px" width="22" height="20" viewBox="0 0 22 20"><rect x="1" y="1" width="19" height="17.5" rx="2" fill="#d65fc9" stroke="#3a3a3a" stroke-width="1.1"/><path d="M4.5 14.5 l4 -6 l2.5 3 l1.5 -1.5 l3 4.5z" fill="#fff"/><circle cx="15" cy="5.5" r="1.4" fill="#fff"/></svg>
<svg style="position:absolute;left:958px;top:98px" width="22" height="20" viewBox="0 0 22 20"><rect x="1" y="1" width="19" height="17.5" rx="2" fill="#6f8ef0" stroke="#3a3a3a" stroke-width="1.1"/><path d="M4 4v11.5M17 4v11.5M3 5h15M3 14.5h15" stroke="#fff" stroke-width="1"/><path d="M6.5 13v-5.5M9.5 13v-3M12.5 13v-4" stroke="#fff" stroke-width="1.3"/></svg>
<svg style="position:absolute;left:992px;top:98px" width="19" height="19" viewBox="0 0 19 19"><g fill="#9ccf4a" stroke="#6a6a6a" stroke-width="0.7"><rect x="0.5" y="0.5" width="4" height="3.5"/><rect x="4.5" y="0.5" width="4" height="3.5"/><rect x="8.5" y="0.5" width="4" height="3.5"/><rect x="12.5" y="0.5" width="4.5" height="3.5"/></g><g fill="#fff" stroke="#6a6a6a" stroke-width="0.8"><rect x="0.5" y="4" width="4" height="3.5"/><rect x="0.5" y="7.5" width="4" height="3.5"/><rect x="0.5" y="11" width="4" height="3.5"/><rect x="0.5" y="14.5" width="4" height="3.5"/></g><path d="M16 7 v3.5 a2 2 0 0 1 -2 2 h-6" fill="none" stroke="#e8541e" stroke-width="1.3"/><path d="M9 10 l-3 2.5 l3 2.5z" fill="#e8541e"/></svg>
<div style="position:absolute;left:1022px;top:92px;width:1px;height:32px;background:#dcdcdc"></div>
<svg style="position:absolute;left:1031px;top:99px" width="20" height="19" viewBox="0 0 20 19"><path d="M1 17 h6 v-2.2 C3.5 13 2 10.5 2 7.8 C2 4 5 1 10 1 C15 1 18 4 18 7.8 C18 10.5 16.5 13 13 14.8 v2.2 h6" fill="none" stroke="#2a2a2a" stroke-width="2"/></svg>
<svg style="position:absolute;left:1060px;top:108px" width="7" height="4" viewBox="0 0 7 4"><path d="M0 0 h7 l-3.5 4z" fill="#1a1a1a"/></svg>
<svg style="position:absolute;left:1078px;top:99px" width="18" height="18" viewBox="0 0 18 18"><path d="M7.5 10.5 l3 -3" stroke="#3a3a3a" stroke-width="1.3"/><rect x="-3.5" y="-2.5" width="9" height="5" rx="2.5" transform="translate(5 13) rotate(-45)" fill="none" stroke="#3a3a3a" stroke-width="1.3"/><rect x="-4.5" y="-2.5" width="9" height="5" rx="2.5" transform="translate(12.5 5.5) rotate(-45)" fill="none" stroke="#3a3a3a" stroke-width="1.3"/></svg>
<svg style="position:absolute;left:1110px;top:99px" width="20" height="18" viewBox="0 0 20 18"><path d="M2.5 1 h15 a1.5 1.5 0 0 1 1.5 1.5 v9 a1.5 1.5 0 0 1 -1.5 1.5 h-8 l-2.5 3.5 v-3.5 h-4.5 a1.5 1.5 0 0 1 -1.5 -1.5 v-9 a1.5 1.5 0 0 1 1.5 -1.5z" fill="#f39080" stroke="#3a3a3a" stroke-width="1.1"/><path d="M4.5 5h11M4.5 7.5h11M4.5 10h11" stroke="#fff" stroke-width="1"/></svg>
<svg style="position:absolute;left:1143px;top:98px" width="20" height="20" viewBox="0 0 20 20"><rect x="1" y="1" width="17.5" height="17.5" rx="2" fill="#e0e0e0" stroke="#c0c0c0" stroke-width="1.1"/><path d="M4 4.5h11.5M4 15h11.5" stroke="#bcbcbc" stroke-width="1.4"/></svg>
<div style="position:absolute;left:1173px;top:92px;width:1px;height:32px;background:#dcdcdc"></div>
<svg style="position:absolute;left:1182px;top:96px" width="25" height="25" viewBox="0 0 25 25"><rect x="1" y="1" width="18" height="17" rx="1" fill="#fff" stroke="#6a6a6a" stroke-width="1"/><rect x="1.5" y="1.5" width="10" height="11" fill="#f3d6f3"/><path d="M1 5h18M1 9h18M1 13h18M6.3 1v17M11.5 1v17" stroke="#6a6a6a" stroke-width="0.9"/><path d="M1 5h10.5M1 9h10.5M6.3 1v12" stroke="#8a2a8a" stroke-width="0.9"/><path d="M1 13 V1.5 H11.5 V13z" fill="none" stroke="#8a2a8a" stroke-width="1.3"/><rect x="14.5" y="15" width="9.5" height="6" rx="2" fill="#9a9a9a" stroke="#4a4a4a" stroke-width="1"/><rect x="16.5" y="12" width="5.5" height="3.5" fill="#fff" stroke="#4a4a4a" stroke-width="0.9"/><rect x="16.5" y="18" width="5.5" height="5" fill="#fff" stroke="#4a4a4a" stroke-width="0.9"/></svg>
<svg style="position:absolute;left:1215px;top:98px" width="20" height="20" viewBox="0 0 20 20"><rect x="1" y="1" width="18" height="18" rx="1.5" fill="#fff" stroke="#6a6a6a" stroke-width="1.1"/><rect x="1.5" y="1.5" width="17" height="3.5" fill="#a8bff2"/><rect x="1.5" y="1.5" width="5" height="17" fill="#a8bff2"/><path d="M1 5h18M1 9.5h18M1 14h18M6.5 1v18M12.5 1v18" stroke="#6a6a6a" stroke-width="1"/><path d="M1 5h5.5M1 9.5h5.5M1 14h5.5M6.5 1v4M12.5 1v4" stroke="#ffffff" stroke-width="0.8" opacity="0.7"/><path d="M6.5 19 V5 H19 V2.5 a1.5 1.5 0 0 0 -1.5 -1.5 H2.5 a1.5 1.5 0 0 0 -1.5 1.5 V17.5 a1.5 1.5 0 0 0 1.5 1.5z" fill="none" stroke="#2a5ae0" stroke-width="1.2"/></svg>
<svg style="position:absolute;left:1244px;top:108px" width="7" height="4" viewBox="0 0 7 4"><path d="M0 0 h7 l-3.5 4z" fill="#1a1a1a"/></svg>
<svg style="position:absolute;left:1260px;top:98px" width="22" height="21" viewBox="0 0 22 21"><rect x="1" y="1" width="18" height="7.5" rx="1.5" fill="#fff" stroke="#6a6a6a" stroke-width="1.1"/><rect x="1" y="12" width="18" height="7.5" rx="1.5" fill="#fff" stroke="#6a6a6a" stroke-width="1.1"/><path d="M7 1v7.5M13 1v7.5M1 4.7h18M7 12v7.5M13 12v7.5M1 15.7h18" stroke="#6a6a6a" stroke-width="1"/><path d="M0 10.2h21" stroke="#e060d0" stroke-width="1" stroke-dasharray="2 1.5"/></svg>
<div style="position:absolute;left:1292px;top:92px;width:1px;height:32px;background:#dcdcdc"></div>
<svg style="position:absolute;left:1302px;top:98px" width="20" height="20" viewBox="0 0 20 20"><path d="M17.5 1.5 a2 2 0 0 1 1 3 l-9 9 l-2.5 -2.5 l9 -9 a2 2 0 0 1 1.5 -0.5z" fill="#9a9a9a" stroke="#3a3a3a" stroke-width="1"/><path d="M6.5 11.5 l2.5 2.5 c-1 3 -4 5 -8 5 c0 -4 2 -7 5.5 -7.5z" fill="#f39080" stroke="#3a3a3a" stroke-width="1"/></svg>
<div style="position:absolute;left:74px;top:130px;width:221px;height:34px;box-sizing:border-box;background:#fff;border:1px solid #c8c8c8;border-radius:6px"></div>
<div style="position:absolute;left:259px;top:131px;width:1px;height:32px;background:#d0d0d0"></div>
<div style="position:absolute;left:84.8px;top:139.75px;font:italic normal 14px/14px 'Liberation Sans',sans-serif;color:#1e1e1e;letter-spacing:0.05px;white-space:nowrap;">Calibri</div>
<svg style="position:absolute;left:271.5px;top:144.5px" width="11" height="7" viewBox="0 0 11 7"><path d="M0.7 0.7 L5.5 5.5 L10.3 0.7" fill="none" stroke="#3a3a3a" stroke-width="1.2"/></svg>
<div style="position:absolute;left:303px;top:130px;width:101px;height:34px;box-sizing:border-box;background:#fff;border:1px solid #c8c8c8;border-radius:6px"></div>
<div style="position:absolute;left:368px;top:131px;width:1px;height:32px;background:#d0d0d0"></div>
<div style="position:absolute;left:313.1px;top:139.95px;font:normal normal 14px/14px 'Liberation Sans',sans-serif;color:#1e1e1e;letter-spacing:0.45px;white-space:nowrap;">12 pt</div>
<svg style="position:absolute;left:380.5px;top:144.5px" width="11" height="7" viewBox="0 0 11 7"><path d="M0.7 0.7 L5.5 5.5 L10.3 0.7" fill="none" stroke="#3a3a3a" stroke-width="1.2"/></svg>
<div style="position:absolute;left:408px;top:131px;width:1px;height:32px;background:#dcdcdc"></div>
<svg style="position:absolute;left:420px;top:138px" width="17" height="18" viewBox="0 0 17 18"><path d="M1.5 1.5 h7 c3.5 0 5 1.7 5 3.8 c0 1.6 -0.9 2.6 -2.2 3.1 c1.8 0.4 3.1 1.7 3.1 3.7 c0 2.6 -2 4.4 -5.3 4.4 h-7.6z M5.3 4.5 v3.3 h2.8 c1.2 0 1.8 -0.6 1.8 -1.65 c0 -1 -0.6 -1.65 -1.8 -1.65z M5.3 10.6 v3.5 h3.2 c1.4 0 2.1 -0.6 2.1 -1.75 c0 -1.15 -0.7 -1.75 -2.1 -1.75z" fill="#2a2a2a" fill-rule="evenodd"/></svg>
<svg style="position:absolute;left:453px;top:138px" width="18" height="18" viewBox="0 0 18 18"><path d="M5 1.5 h11 M1 16.5 h11 M11.5 1.5 L5.5 16.5" fill="none" stroke="#2a2a2a" stroke-width="2.2"/></svg>
<svg style="position:absolute;left:485px;top:137px" width="16" height="21" viewBox="0 0 16 21"><path d="M4.2 1 v9.5 a3.8 3.8 0 0 0 7.6 0 v-9.5" fill="none" stroke="#2a2a2a" stroke-width="2.6"/><rect x="1" y="18.9" width="14" height="1.1" fill="#3a3a3a"/></svg>
<svg style="position:absolute;left:512px;top:147px" width="7" height="4" viewBox="0 0 7 4"><path d="M0 0 h7 l-3.5 4z" fill="#1a1a1a"/></svg>
<div style="position:absolute;left:526px;top:131px;width:1px;height:32px;background:#dcdcdc"></div>
<svg style="position:absolute;left:533px;top:138px" width="25" height="21" viewBox="0 0 25 21"><path d="M5 15 L10.5 1 h3 l5.5 14 h-3.3 l-1.2 -3.3 h-5 l-1.2 3.3z M10.3 9 h3.4 l-1.7 -5z" fill="#2a2a2a" fill-rule="evenodd"/><rect x="0" y="15" width="24" height="5.6" fill="#c9211e"/></svg>
<svg style="position:absolute;left:564px;top:147px" width="7" height="4" viewBox="0 0 7 4"><path d="M0 0 h7 l-3.5 4z" fill="#1a1a1a"/></svg>
<svg style="position:absolute;left:576px;top:134px" width="26" height="25" viewBox="0 0 26 25"><path d="M3.3 7.4 h5.7 v2.6 h-3 v7.5 h-2.7z" fill="#8ad0f0" stroke="#3a3a3a" stroke-width="0.9" stroke-linejoin="round"/><circle cx="14.9" cy="3.8" r="2.6" fill="none" stroke="#3a3a3a" stroke-width="1"/><path d="M6.7 11.1 L13.1 5.5 L20.9 11.9 L14.2 18.2z" fill="#fff" stroke="#3a3a3a" stroke-width="1.2" stroke-linejoin="round"/><path d="M14.9 6.4 L12.8 10.3" stroke="#3a3a3a" stroke-width="0.9"/><circle cx="12.6" cy="10.6" r="1" fill="none" stroke="#3a3a3a" stroke-width="0.8"/><rect x="1.1" y="19" width="23.9" height="5.6" fill="#ffff00"/></svg>
<svg style="position:absolute;left:608px;top:147px" width="7" height="4" viewBox="0 0 7 4"><path d="M0 0 h7 l-3.5 4z" fill="#1a1a1a"/></svg>
<div style="position:absolute;left:622px;top:131px;width:1px;height:32px;background:#dcdcdc"></div>
<svg style="position:absolute;left:634px;top:139px" width="18" height="17" viewBox="0 0 18 17"><rect x="0" y="0" width="18" height="1.2" fill="#2a2a2a"/><rect x="0" y="3" width="14" height="1.2" fill="#2a2a2a"/><rect x="0" y="6" width="10" height="1.2" fill="#2a2a2a"/><rect x="0" y="9" width="18" height="1.2" fill="#2a2a2a"/><rect x="0" y="12" width="12" height="1.2" fill="#2a2a2a"/><rect x="0" y="15" width="16" height="1.2" fill="#2a2a2a"/></svg>
<svg style="position:absolute;left:667px;top:139px" width="18" height="17" viewBox="0 0 18 17"><rect x="0.0" y="0" width="18" height="1.2" fill="#2a2a2a"/><rect x="2.0" y="3" width="14" height="1.2" fill="#2a2a2a"/><rect x="4.0" y="6" width="10" height="1.2" fill="#2a2a2a"/><rect x="0.0" y="9" width="18" height="1.2" fill="#2a2a2a"/><rect x="3.0" y="12" width="12" height="1.2" fill="#2a2a2a"/><rect x="1.0" y="15" width="16" height="1.2" fill="#2a2a2a"/></svg>
<svg style="position:absolute;left:700px;top:139px" width="18" height="17" viewBox="0 0 18 17"><rect x="0" y="0" width="18" height="1.2" fill="#2a2a2a"/><rect x="4" y="3" width="14" height="1.2" fill="#2a2a2a"/><rect x="8" y="6" width="10" height="1.2" fill="#2a2a2a"/><rect x="0" y="9" width="18" height="1.2" fill="#2a2a2a"/><rect x="6" y="12" width="12" height="1.2" fill="#2a2a2a"/><rect x="2" y="15" width="16" height="1.2" fill="#2a2a2a"/></svg>
<div style="position:absolute;left:730px;top:131px;width:1px;height:32px;background:#dcdcdc"></div>
<svg style="position:absolute;left:740px;top:137px" width="21" height="19" viewBox="0 0 21 19"><rect x="0" y="1" width="20" height="1.1" fill="#2a2a2a"/><rect x="3" y="3.5" width="14" height="1.1" fill="#2a2a2a"/><path d="M10 17.5 v-7" stroke="#e8541e" stroke-width="1.8"/><path d="M6.5 11.5 l3.5 -4.5 l3.5 4.5z" fill="#e8541e"/></svg>
<svg style="position:absolute;left:772px;top:136px" width="21" height="22" viewBox="0 0 21 22"><rect x="0" y="10" width="20" height="1.1" fill="#2a2a2a"/><rect x="3" y="12.5" width="14" height="1.1" fill="#2a2a2a"/><path d="M10 1 v4" stroke="#e8541e" stroke-width="1.8"/><path d="M7.5 4.5 l2.5 3 l2.5 -3z" fill="#e8541e"/><path d="M10 21 v-3.5" stroke="#e8541e" stroke-width="1.8"/><path d="M7.5 18 l2.5 -3 l2.5 3z" fill="#e8541e"/></svg>
<div style="position:absolute;left:799px;top:130px;width:33px;height:35px;background:#d9d9d9;border-radius:6px"></div>
<svg style="position:absolute;left:805px;top:138px" width="21" height="18" viewBox="0 0 21 18"><path d="M10 1 v7" stroke="#e8541e" stroke-width="1.8"/><path d="M6.5 7 l3.5 4.5 l3.5 -4.5z" fill="#e8541e"/><rect x="0" y="13.5" width="20" height="1.1" fill="#2a2a2a"/><rect x="3" y="16" width="14" height="1.1" fill="#2a2a2a"/></svg>
<div style="position:absolute;left:837px;top:131px;width:1px;height:32px;background:#dcdcdc"></div>
<svg style="position:absolute;left:847px;top:137px" width="20" height="20" viewBox="0 0 20 20"><rect x="1" y="1" width="18" height="1.1" fill="#2a2a2a"/><rect x="1" y="3.2" width="18" height="1.1" fill="#2a2a2a"/><rect x="1" y="5.4" width="9" height="1.1" fill="#2a2a2a"/><rect x="1" y="15.5" width="18" height="1.1" fill="#2a2a2a"/><rect x="1" y="17.7" width="18" height="1.1" fill="#2a2a2a"/><path d="M11 7 h4 v4" fill="none" stroke="#e8541e" stroke-width="1.2"/><path d="M12.5 10 l2.5 3.5 l2.5 -3.5z" fill="#e8541e"/></svg>
<div style="position:absolute;left:878px;top:131px;width:1px;height:32px;background:#dcdcdc"></div>
<svg style="position:absolute;left:888.5px;top:137px" width="19" height="19" viewBox="0 0 19 19"><rect x="1" y="1" width="17" height="17" rx="1.5" fill="#e6e6e6" stroke="#c4c4c4" stroke-width="1"/><path d="M1 4.5h17M1 14.5h17M5 1v17M14 1v17" stroke="#c4c4c4" stroke-width="0.9"/><rect x="5" y="4.5" width="9" height="10" fill="#e6e6e6" stroke="#c4c4c4" stroke-width="0.9"/></svg>
<svg style="position:absolute;left:921.5px;top:137px" width="19" height="19" viewBox="0 0 19 19"><rect x="1" y="1" width="17" height="17" rx="1.5" fill="#e6e6e6" stroke="#c4c4c4" stroke-width="1"/><path d="M1 4.5h17M1 14.5h17M5 1v17M14 1v17" stroke="#c4c4c4" stroke-width="0.9"/><rect x="5" y="4.5" width="9" height="10" fill="#e6e6e6" stroke="#c4c4c4" stroke-width="0.9"/><path d="M1 8h4M1 11h4" stroke="#c4c4c4" stroke-width="0.9"/></svg>
<svg style="position:absolute;left:954.5px;top:137px" width="19" height="19" viewBox="0 0 19 19"><rect x="1" y="1" width="17" height="17" rx="1.5" fill="#e6e6e6" stroke="#c4c4c4" stroke-width="1"/><path d="M1 4.5h17M1 14.5h17M5 1v17M14 1v17" stroke="#c4c4c4" stroke-width="0.9"/><rect x="5" y="4.5" width="9" height="10" fill="#e6e6e6" stroke="#c4c4c4" stroke-width="0.9"/><path d="M7 7 l5 5 M12 7 l-5 5" stroke="#c4c4c4" stroke-width="0.9"/></svg>
<div style="position:absolute;left:984px;top:131px;width:1px;height:32px;background:#dcdcdc"></div>
<svg style="position:absolute;left:993px;top:140px" width="20" height="14" viewBox="0 0 20 14"><rect x="1" y="1" width="17" height="11.5" rx="1.5" fill="#7391f0" stroke="#3a3a3a" stroke-width="1"/><circle cx="9.5" cy="6.7" r="2.6" fill="none" stroke="#fff" stroke-width="1.1"/></svg>
<svg style="position:absolute;left:1022px;top:147px" width="7" height="4" viewBox="0 0 7 4"><path d="M0 0 h7 l-3.5 4z" fill="#1a1a1a"/></svg>
<svg style="position:absolute;left:1039px;top:137px" width="20" height="20" viewBox="0 0 20 20"><rect x="1" y="1" width="17.5" height="17.5" rx="1.5" fill="#d65fc9" stroke="#3a3a3a" stroke-width="1"/><path d="M5 15 l9 -11" stroke="#fff" stroke-width="1.3"/><circle cx="6" cy="6" r="1.8" fill="none" stroke="#fff" stroke-width="1.1"/><circle cx="13.5" cy="13.5" r="1.8" fill="none" stroke="#fff" stroke-width="1.1"/></svg>
<svg style="position:absolute;left:1072px;top:137px" width="20" height="20" viewBox="0 0 20 20"><rect x="1" y="1" width="17.5" height="17.5" rx="1.5" fill="#9ccf4a" stroke="#3a3a3a" stroke-width="1"/><text x="9.8" y="13.8" text-anchor="middle" font-family="Liberation Sans" font-size="9.5" fill="#3a3a3a">0.0</text></svg>
<svg style="position:absolute;left:1105px;top:137px" width="20" height="20" viewBox="0 0 20 20"><rect x="1" y="1" width="17.5" height="17.5" rx="1.5" fill="#3ba99c" stroke="#3a3a3a" stroke-width="1"/><text x="9.8" y="13.8" text-anchor="middle" font-family="Liberation Sans" font-size="9.5" fill="#fff">151</text></svg>
<div style="position:absolute;left:1136px;top:131px;width:1px;height:32px;background:#dcdcdc"></div>
<svg style="position:absolute;left:1145px;top:140px" width="25" height="17" viewBox="0 0 25 17"><text x="0" y="13" font-family="Liberation Sans" font-weight="bold" font-size="14" fill="#2a2a2a">.00</text><circle cx="19.5" cy="12.5" r="3.5" fill="#2a9a2a"/><path d="M19.5 10.5v4M17.5 12.5h4" stroke="#fff" stroke-width="1.1"/></svg>
<svg style="position:absolute;left:1178px;top:140px" width="25" height="17" viewBox="0 0 25 17"><text x="0" y="13" font-family="Liberation Sans" font-weight="bold" font-size="14" fill="#2a2a2a">.00</text><circle cx="19.5" cy="12.5" r="3.5" fill="#d0202a"/><path d="M18 11l3 3M21 11l-3 3" stroke="#fff" stroke-width="1"/></svg>
<div style="position:absolute;left:1210px;top:131px;width:1px;height:32px;background:#dcdcdc"></div>
<svg style="position:absolute;left:1221px;top:140px" width="18" height="16" viewBox="0 0 18 16"><path d="M0 1 l5 2.5 l-5 2.5z" fill="#e8541e"/><rect x="8" y="0" width="10" height="1.1" fill="#2a2a2a"/><rect x="8" y="2" width="10" height="1.1" fill="#2a2a2a"/><rect x="8" y="4" width="10" height="1.1" fill="#2a2a2a"/><rect x="8" y="6" width="10" height="1.1" fill="#2a2a2a"/><rect x="0" y="9" width="18" height="1.1" fill="#2a2a2a"/><rect x="0" y="11" width="18" height="1.1" fill="#2a2a2a"/><rect x="0" y="13" width="18" height="1.1" fill="#2a2a2a"/></svg>
<svg style="position:absolute;left:1254px;top:140px" width="18" height="16" viewBox="0 0 18 16"><path d="M5 1 l-5 2.5 l5 2.5z" fill="#e8541e"/><rect x="8" y="0" width="10" height="1.1" fill="#2a2a2a"/><rect x="8" y="2" width="10" height="1.1" fill="#2a2a2a"/><rect x="8" y="4" width="10" height="1.1" fill="#2a2a2a"/><rect x="8" y="6" width="10" height="1.1" fill="#2a2a2a"/><rect x="0" y="9" width="18" height="1.1" fill="#2a2a2a"/><rect x="0" y="11" width="18" height="1.1" fill="#2a2a2a"/><rect x="0" y="13" width="18" height="1.1" fill="#2a2a2a"/></svg>
<div style="position:absolute;left:1284px;top:131px;width:1px;height:32px;background:#dcdcdc"></div>
<svg style="position:absolute;left:1291px;top:136px" width="22" height="22" viewBox="0 0 22 22"><rect x="2" y="2" width="18" height="18" fill="#fff" stroke="#e8541e" stroke-width="2"/><rect x="3" y="3" width="16" height="16" fill="none" stroke="#2a2a2a" stroke-width="0.8"/></svg>
<svg style="position:absolute;left:1321px;top:147px" width="7" height="4" viewBox="0 0 7 4"><path d="M0 0 h7 l-3.5 4z" fill="#1a1a1a"/></svg>
<svg style="position:absolute;left:1335px;top:136px" width="24" height="24" viewBox="0 0 24 24"><rect x="2" y="2" width="18" height="18" fill="#fff" stroke="#e8541e" stroke-width="2"/><rect x="3" y="3" width="16" height="16" fill="none" stroke="#2a2a2a" stroke-width="0.8"/><circle cx="18.5" cy="18.5" r="4.2" fill="#fafafa" stroke="#8a8a8a" stroke-width="1.2" stroke-dasharray="1.6 0.9"/><circle cx="18.5" cy="18.5" r="1.6" fill="none" stroke="#8a8a8a" stroke-width="1"/></svg>
<svg style="position:absolute;left:1365px;top:147px" width="7" height="4" viewBox="0 0 7 4"><path d="M0 0 h7 l-3.5 4z" fill="#1a1a1a"/></svg>
<svg style="position:absolute;left:1377px;top:136px" width="26" height="24" viewBox="0 0 26 24"><rect x="2" y="2" width="18" height="18" fill="#fff" stroke="#e8541e" stroke-width="2"/><rect x="3" y="3" width="16" height="16" fill="none" stroke="#2a2a2a" stroke-width="0.8"/><path d="M11 9 c-2 3 -3 4 -3 5.5 a3 3 0 0 0 6 0 c0 -1.5 -1 -2.5 -3 -5.5z" fill="#2a2a2a"/><rect x="0" y="17" width="25" height="5.6" fill="#2a5fa0"/></svg>
<svg style="position:absolute;left:1409px;top:147px" width="7" height="4" viewBox="0 0 7 4"><path d="M0 0 h7 l-3.5 4z" fill="#1a1a1a"/></svg>
<div style="position:absolute;left:1423px;top:131px;width:1px;height:32px;background:#dcdcdc"></div>
<svg style="position:absolute;left:1432px;top:137px" width="20" height="20" viewBox="0 0 20 20"><rect x="1" y="1" width="17.5" height="17.5" rx="2" fill="#fff" stroke="#3a3a3a" stroke-width="1.1"/><rect x="4" y="4.5" width="12" height="1.8" fill="#d0202a"/><rect x="4" y="8.5" width="5" height="1.8" fill="#3aa02a"/><rect x="4" y="12.5" width="9" height="1.8" fill="#3aa02a"/></svg>
<svg style="position:absolute;left:1461px;top:147px" width="7" height="4" viewBox="0 0 7 4"><path d="M0 0 h7 l-3.5 4z" fill="#1a1a1a"/></svg>
<div style="position:absolute;left:70px;top:170px;width:1539px;height:35px;background:#fafafa"></div>
<div style="position:absolute;left:74px;top:169px;width:173px;height:34px;box-sizing:border-box;background:#fff;border:1px solid #c8c8c8;border-radius:6px"></div>
<div style="position:absolute;left:211px;top:170px;width:1px;height:32px;background:#d0d0d0"></div>
<div style="position:absolute;left:83px;top:179.15px;font:normal normal 14px/14px 'Liberation Sans',sans-serif;color:#1e1e1e;letter-spacing:-0.6px;white-space:nowrap;">A1</div>
<svg style="position:absolute;left:223.5px;top:183.5px" width="11" height="7" viewBox="0 0 11 7"><path d="M0.7 0.7 L5.5 5.5 L10.3 0.7" fill="none" stroke="#3a3a3a" stroke-width="1.2"/></svg>
<div style="position:absolute;left:251px;top:173px;width:1px;height:25px;background:#dcdcdc"></div>
<svg style="position:absolute;left:262px;top:178px" width="13" height="14" viewBox="0 0 13 14"><path d="M7.5 1.2 c-2 -0.3 -3.2 0.6 -3.2 2.6 v9.5 M1.8 5.5 h4.6" fill="none" stroke="#2a2a2a" stroke-width="1.7"/><path d="M8 9 l3.5 3.5 M11.5 9 l-3.5 3.5" stroke="#2a2a2a" stroke-width="1"/></svg>
<svg style="position:absolute;left:284px;top:178px" width="13" height="14" viewBox="0 0 13 14"><path d="M1 1 h11 v2.3 h-1.2 v-0.8 h-7 l4 4.8 l-4 4.8 h7 v-0.8 h1.2 v2.3 h-11 v-1.4 l4.3 -4.9 l-4.3 -4.9z" fill="#2a2a2a"/></svg>
<svg style="position:absolute;left:306px;top:185px" width="7" height="4" viewBox="0 0 7 4"><path d="M0 0 h7 l-3.5 4z" fill="#2a2a2a"/></svg>
<svg style="position:absolute;left:322px;top:180px" width="14" height="9" viewBox="0 0 14 9"><rect x="0.5" y="0.5" width="12.5" height="2.2" fill="#2a2a2a"/><rect x="0.5" y="5.8" width="12.5" height="2.2" fill="#2a2a2a"/></svg>
<div style="position:absolute;left:341px;top:174px;width:1246px;height:24px;box-sizing:border-box;background:#fff;border:1px solid #c4c4c4"></div>
<svg style="position:absolute;left:1590.5px;top:183.5px" width="11" height="7" viewBox="0 0 11 7"><path d="M0.7 0.7 L5.5 5.5 L10.3 0.7" fill="none" stroke="#3a3a3a" stroke-width="1.2"/></svg>
<div style="position:absolute;left:1609px;top:167px;width:1px;height:858px;background:#bdbdbd"></div>
<div style="position:absolute;left:1610px;top:167px;width:58px;height:858px;background:#fafafa"></div>
<svg style="position:absolute;left:1634px;top:181px" width="12" height="11" viewBox="0 0 12 11"><rect x="1" y="1" width="10" height="1.2" fill="#2a2a2a"/><rect x="1" y="5" width="10" height="1.2" fill="#2a2a2a"/><rect x="1" y="9" width="10" height="1.2" fill="#2a2a2a"/></svg>
<div style="position:absolute;left:1622px;top:214px;width:36px;height:34px;background:#d9d9d9;border-radius:6px"></div>
<svg style="position:absolute;left:1631px;top:222px" width="18" height="18" viewBox="0 0 18 18"><rect x="1" y="1.5" width="16" height="6.5" rx="3.25" fill="#e8541e"/><circle cx="13.5" cy="4.75" r="2.2" fill="#fff"/><rect x="1" y="10" width="16" height="6.5" rx="3.25" fill="#e8541e"/><circle cx="4.5" cy="13.25" r="2.2" fill="#fff"/></svg>
<svg style="position:absolute;left:1627px;top:262px" width="24" height="23" viewBox="0 0 24 23"><rect x="2.5" y="7" width="12" height="7" rx="1.5" transform="rotate(-40 8.5 10.5)" fill="#fff" stroke="#2a2a2a" stroke-width="1.1"/><rect x="5.5" y="9" width="11" height="6.5" rx="1.5" transform="rotate(-40 11 12.25)" fill="#fff" stroke="#2a2a2a" stroke-width="1.1"/><path d="M1.8 20.8 l4.2 -4.6" stroke="#f39080" stroke-width="2.6" stroke-linecap="round"/><path d="M12 13.2 L15.9 1.8 h2.6 L22.6 13.2 h-2.6 l-0.9 -2.6 h-4.4 l-0.9 2.6z M16.3 8.6 h3.1 l-1.55 -4.4z" fill="#2a2a2a" fill-rule="evenodd"/></svg>
<svg style="position:absolute;left:1629px;top:305px" width="22" height="20" viewBox="0 0 22 20"><rect x="1" y="1" width="15" height="12" rx="1.5" fill="#d65fc9" stroke="#3a3a3a" stroke-width="1"/><rect x="5" y="6" width="15.5" height="12.5" rx="1.5" fill="#d65fc9" stroke="#3a3a3a" stroke-width="1"/><path d="M8 15.5 l3 -4 l2 2.5 l1 -1 l2.5 2.5z" fill="#fff"/><circle cx="16.5" cy="9.5" r="1" fill="#fff"/></svg>
<svg style="position:absolute;left:1629px;top:346px" width="22" height="22" viewBox="0 0 22 22"><circle cx="11" cy="11" r="9.6" fill="#4a78e0" stroke="#2a2a2a" stroke-width="1"/><path d="M15 7 l-5 2.5 l-3 5.5 l5 -2.5z" fill="#fff"/><path d="M15 7 l-3 5.5 l-2 -3z" fill="#e03030"/></svg>
<svg style="position:absolute;left:1632px;top:389px" width="19" height="20" viewBox="0 0 19 20"><path d="M8 1.5 c-2 -0.4 -3.5 0.6 -3.5 2.8 v13.5 M1.5 6.5 h5.5" fill="none" stroke="#2a2a2a" stroke-width="1.9"/><path d="M10 12 l5.5 5.5 M15.5 12 l-5.5 5.5" stroke="#2a2a2a" stroke-width="1.5"/></svg>
<div style="position:absolute;left:70px;top:205px;width:1527px;height:21px;background:#f9f9f9"></div>
<div style="position:absolute;left:70px;top:225px;width:1527px;height:1px;background:#9b9b9b"></div>
<div style="position:absolute;left:70px;top:226px;width:40px;height:761px;background:#f9f9f9"></div>
<div style="position:absolute;left:110px;top:206px;width:1px;height:781px;background:#9b9b9b"></div>
<div style="position:absolute;left:111px;top:226px;width:1486px;height:761px;background:#ffffff"></div>
<div style="position:absolute;left:110px;top:206px;width:27px;height:20px;background:#e95420"></div>
<div style="position:absolute;left:110px;top:225px;width:27px;height:1px;background:#d44a1a"></div>
<div style="position:absolute;left:110px;top:206px;width:1px;height:19px;background:#8a8f96"></div>
<div style="position:absolute;left:110px;width:27px;top:209.15px;text-align:center;font:normal bold 14px/14px 'Liberation Sans',sans-serif;color:#ffffff;letter-spacing:0px;white-space:nowrap;transform:scaleX(0.88)">A</div>
<div style="position:absolute;left:137px;width:99px;top:209.15px;text-align:center;font:normal normal 14px/14px 'Liberation Sans',sans-serif;color:#3c3c3c;letter-spacing:0px;white-space:nowrap;transform:scaleX(0.93)">B</div>
<div style="position:absolute;left:236px;top:206px;width:1px;height:19px;background:#9b9b9b"></div>
<div style="position:absolute;left:237px;width:99px;top:209.15px;text-align:center;font:normal normal 14px/14px 'Liberation Sans',sans-serif;color:#3c3c3c;letter-spacing:0px;white-space:nowrap;transform:scaleX(0.93)">C</div>
<div style="position:absolute;left:336px;top:206px;width:1px;height:19px;background:#9b9b9b"></div>
<div style="position:absolute;left:337px;width:99px;top:209.15px;text-align:center;font:normal normal 14px/14px 'Liberation Sans',sans-serif;color:#3c3c3c;letter-spacing:0px;white-space:nowrap;transform:scaleX(0.93)">D</div>
<div style="position:absolute;left:436px;top:206px;width:1px;height:19px;background:#9b9b9b"></div>
<div style="position:absolute;left:437px;width:99px;top:209.15px;text-align:center;font:normal normal 14px/14px 'Liberation Sans',sans-serif;color:#3c3c3c;letter-spacing:0px;white-space:nowrap;transform:scaleX(0.93)">E</div>
<div style="position:absolute;left:536px;top:206px;width:1px;height:19px;background:#9b9b9b"></div>
<div style="position:absolute;left:537px;width:111px;top:209.15px;text-align:center;font:normal normal 14px/14px 'Liberation Sans',sans-serif;color:#3c3c3c;letter-spacing:0px;white-space:nowrap;transform:scaleX(0.93)">F</div>
<div style="position:absolute;left:648px;top:206px;width:1px;height:19px;background:#9b9b9b"></div>
<div style="position:absolute;left:649px;width:99px;top:209.15px;text-align:center;font:normal normal 14px/14px 'Liberation Sans',sans-serif;color:#3c3c3c;letter-spacing:0px;white-space:nowrap;transform:scaleX(0.93)">G</div>
<div style="position:absolute;left:748px;top:206px;width:1px;height:19px;background:#9b9b9b"></div>
<div style="position:absolute;left:749px;width:99px;top:209.15px;text-align:center;font:normal normal 14px/14px 'Liberation Sans',sans-serif;color:#3c3c3c;letter-spacing:0px;white-space:nowrap;transform:scaleX(0.93)">H</div>
<div style="position:absolute;left:848px;top:206px;width:1px;height:19px;background:#9b9b9b"></div>
<div style="position:absolute;left:849px;width:99px;top:209.15px;text-align:center;font:normal normal 14px/14px 'Liberation Sans',sans-serif;color:#3c3c3c;letter-spacing:0px;white-space:nowrap;transform:scaleX(0.93)">I</div>
<div style="position:absolute;left:948px;top:206px;width:1px;height:19px;background:#9b9b9b"></div>
<div style="position:absolute;left:949px;width:99px;top:209.15px;text-align:center;font:normal normal 14px/14px 'Liberation Sans',sans-serif;color:#3c3c3c;letter-spacing:0px;white-space:nowrap;transform:scaleX(0.93)">J</div>
<div style="position:absolute;left:1048px;top:206px;width:1px;height:19px;background:#9b9b9b"></div>
<div style="position:absolute;left:1049px;width:135px;top:209.15px;text-align:center;font:normal normal 14px/14px 'Liberation Sans',sans-serif;color:#3c3c3c;letter-spacing:0px;white-space:nowrap;transform:scaleX(0.93)">K</div>
<div style="position:absolute;left:1184px;top:206px;width:1px;height:19px;background:#9b9b9b"></div>
<div style="position:absolute;left:1185px;width:285px;top:209.15px;text-align:center;font:normal normal 14px/14px 'Liberation Sans',sans-serif;color:#3c3c3c;letter-spacing:0px;white-space:nowrap;transform:scaleX(0.93)">L</div>
<div style="position:absolute;left:1470px;top:206px;width:1px;height:19px;background:#9b9b9b"></div>
<div style="position:absolute;left:1471px;width:99px;top:209.15px;text-align:center;font:normal normal 14px/14px 'Liberation Sans',sans-serif;color:#3c3c3c;letter-spacing:0px;white-space:nowrap;transform:scaleX(0.93)">M</div>
<div style="position:absolute;left:1570px;top:206px;width:1px;height:19px;background:#9b9b9b"></div>
<div style="position:absolute;left:70px;top:226px;width:40px;height:12px;overflow:hidden;background:#e95420"><div style="position:absolute;left:0;width:40px;top:-0.05px;text-align:center;font:bold 14px/14px 'Liberation Sans',sans-serif;color:#fff;transform:scaleX(0.93)">1</div></div>
<div style="position:absolute;left:70px;top:238px;width:40px;height:1px;background:#9b9b9b"></div>
<div style="position:absolute;left:70px;top:239px;width:40px;height:12px;overflow:hidden;background:#f9f9f9"><div style="position:absolute;left:0;width:40px;top:-0.05px;text-align:center;font:normal 14px/14px 'Liberation Sans',sans-serif;color:#3c3c3c;transform:scaleX(0.93)">2</div></div>
<div style="position:absolute;left:70px;top:251px;width:40px;height:1px;background:#9b9b9b"></div>
<div style="position:absolute;left:70px;top:252px;width:40px;height:25px;overflow:hidden;background:#f9f9f9"><div style="position:absolute;left:0;width:40px;top:6.45px;text-align:center;font:normal 14px/14px 'Liberation Sans',sans-serif;color:#3c3c3c;transform:scaleX(0.93)">3</div></div>
<div style="position:absolute;left:70px;top:277px;width:40px;height:1px;background:#9b9b9b"></div>
<div style="position:absolute;left:70px;top:278px;width:40px;height:15px;overflow:hidden;background:#f9f9f9"><div style="position:absolute;left:0;width:40px;top:1.45px;text-align:center;font:normal 14px/14px 'Liberation Sans',sans-serif;color:#3c3c3c;transform:scaleX(0.93)">4</div></div>
<div style="position:absolute;left:70px;top:293px;width:40px;height:1px;background:#9b9b9b"></div>
<div style="position:absolute;left:70px;top:294px;width:40px;height:15px;overflow:hidden;background:#f9f9f9"><div style="position:absolute;left:0;width:40px;top:1.45px;text-align:center;font:normal 14px/14px 'Liberation Sans',sans-serif;color:#3c3c3c;transform:scaleX(0.93)">5</div></div>
<div style="position:absolute;left:70px;top:309px;width:40px;height:1px;background:#9b9b9b"></div>
<div style="position:absolute;left:70px;top:310px;width:40px;height:12px;overflow:hidden;background:#f9f9f9"><div style="position:absolute;left:0;width:40px;top:-0.05px;text-align:center;font:normal 14px/14px 'Liberation Sans',sans-serif;color:#3c3c3c;transform:scaleX(0.93)">6</div></div>
<div style="position:absolute;left:70px;top:322px;width:40px;height:1px;background:#9b9b9b"></div>
<div style="position:absolute;left:70px;top:323px;width:40px;height:12px;overflow:hidden;background:#f9f9f9"><div style="position:absolute;left:0;width:40px;top:-0.05px;text-align:center;font:normal 14px/14px 'Liberation Sans',sans-serif;color:#3c3c3c;transform:scaleX(0.93)">7</div></div>
<div style="position:absolute;left:70px;top:335px;width:40px;height:1px;background:#9b9b9b"></div>
<div style="position:absolute;left:70px;top:336px;width:40px;height:12px;overflow:hidden;background:#f9f9f9"><div style="position:absolute;left:0;width:40px;top:-0.05px;text-align:center;font:normal 14px/14px 'Liberation Sans',sans-serif;color:#3c3c3c;transform:scaleX(0.93)">8</div></div>
<div style="position:absolute;left:70px;top:348px;width:40px;height:1px;background:#9b9b9b"></div>
<div style="position:absolute;left:70px;top:349px;width:40px;height:14px;overflow:hidden;background:#f9f9f9"><div style="position:absolute;left:0;width:40px;top:0.95px;text-align:center;font:normal 14px/14px 'Liberation Sans',sans-serif;color:#3c3c3c;transform:scaleX(0.93)">9</div></div>
<div style="position:absolute;left:70px;top:363px;width:40px;height:1px;background:#9b9b9b"></div>
<div style="position:absolute;left:70px;top:364px;width:40px;height:14px;overflow:hidden;background:#f9f9f9"><div style="position:absolute;left:0;width:40px;top:0.95px;text-align:center;font:normal 14px/14px 'Liberation Sans',sans-serif;color:#3c3c3c;transform:scaleX(0.93)">10</div></div>
<div style="position:absolute;left:70px;top:378px;width:40px;height:1px;background:#9b9b9b"></div>
<div style="position:absolute;left:70px;top:379px;width:40px;height:14px;overflow:hidden;background:#f9f9f9"><div style="position:absolute;left:0;width:40px;top:0.95px;text-align:center;font:normal 14px/14px 'Liberation Sans',sans-serif;color:#3c3c3c;transform:scaleX(0.93)">11</div></div>
<div style="position:absolute;left:70px;top:393px;width:40px;height:1px;background:#9b9b9b"></div>
<div style="position:absolute;left:70px;top:394px;width:40px;height:39px;overflow:hidden;background:#f9f9f9"><div style="position:absolute;left:0;width:40px;top:13.45px;text-align:center;font:normal 14px/14px 'Liberation Sans',sans-serif;color:#3c3c3c;transform:scaleX(0.93)">12</div></div>
<div style="position:absolute;left:70px;top:433px;width:40px;height:1px;background:#9b9b9b"></div>
<div style="position:absolute;left:70px;top:434px;width:40px;height:20px;overflow:hidden;background:#f9f9f9"><div style="position:absolute;left:0;width:40px;top:3.95px;text-align:center;font:normal 14px/14px 'Liberation Sans',sans-serif;color:#3c3c3c;transform:scaleX(0.93)">13</div></div>
<div style="position:absolute;left:70px;top:454px;width:40px;height:1px;background:#9b9b9b"></div>
<div style="position:absolute;left:70px;top:455px;width:40px;height:20px;overflow:hidden;background:#f9f9f9"><div style="position:absolute;left:0;width:40px;top:3.95px;text-align:center;font:normal 14px/14px 'Liberation Sans',sans-serif;color:#3c3c3c;transform:scaleX(0.93)">14</div></div>
<div style="position:absolute;left:70px;top:475px;width:40px;height:1px;background:#9b9b9b"></div>
<div style="position:absolute;left:70px;top:476px;width:40px;height:20px;overflow:hidden;background:#f9f9f9"><div style="position:absolute;left:0;width:40px;top:3.95px;text-align:center;font:normal 14px/14px 'Liberation Sans',sans-serif;color:#3c3c3c;transform:scaleX(0.93)">15</div></div>
<div style="position:absolute;left:70px;top:496px;width:40px;height:1px;background:#9b9b9b"></div>
<div style="position:absolute;left:70px;top:497px;width:40px;height:20px;overflow:hidden;background:#f9f9f9"><div style="position:absolute;left:0;width:40px;top:3.95px;text-align:center;font:normal 14px/14px 'Liberation Sans',sans-serif;color:#3c3c3c;transform:scaleX(0.93)">16</div></div>
<div style="position:absolute;left:70px;top:517px;width:40px;height:1px;background:#9b9b9b"></div>
<div style="position:absolute;left:70px;top:518px;width:40px;height:20px;overflow:hidden;background:#f9f9f9"><div style="position:absolute;left:0;width:40px;top:3.95px;text-align:center;font:normal 14px/14px 'Liberation Sans',sans-serif;color:#3c3c3c;transform:scaleX(0.93)">17</div></div>
<div style="position:absolute;left:70px;top:538px;width:40px;height:1px;background:#9b9b9b"></div>
<div style="position:absolute;left:70px;top:539px;width:40px;height:20px;overflow:hidden;background:#f9f9f9"><div style="position:absolute;left:0;width:40px;top:3.95px;text-align:center;font:normal 14px/14px 'Liberation Sans',sans-serif;color:#3c3c3c;transform:scaleX(0.93)">18</div></div>
<div style="position:absolute;left:70px;top:559px;width:40px;height:1px;background:#9b9b9b"></div>
<div style="position:absolute;left:70px;top:560px;width:40px;height:20px;overflow:hidden;background:#f9f9f9"><div style="position:absolute;left:0;width:40px;top:3.95px;text-align:center;font:normal 14px/14px 'Liberation Sans',sans-serif;color:#3c3c3c;transform:scaleX(0.93)">19</div></div>
<div style="position:absolute;left:70px;top:580px;width:40px;height:1px;background:#9b9b9b"></div>
<div style="position:absolute;left:70px;top:581px;width:40px;height:20px;overflow:hidden;background:#f9f9f9"><div style="position:absolute;left:0;width:40px;top:3.95px;text-align:center;font:normal 14px/14px 'Liberation Sans',sans-serif;color:#3c3c3c;transform:scaleX(0.93)">20</div></div>
<div style="position:absolute;left:70px;top:601px;width:40px;height:1px;background:#9b9b9b"></div>
<div style="position:absolute;left:70px;top:602px;width:40px;height:20px;overflow:hidden;background:#f9f9f9"><div style="position:absolute;left:0;width:40px;top:3.95px;text-align:center;font:normal 14px/14px 'Liberation Sans',sans-serif;color:#3c3c3c;transform:scaleX(0.93)">21</div></div>
<div style="position:absolute;left:70px;top:622px;width:40px;height:1px;background:#9b9b9b"></div>
<div style="position:absolute;left:70px;top:623px;width:40px;height:20px;overflow:hidden;background:#f9f9f9"><div style="position:absolute;left:0;width:40px;top:3.95px;text-align:center;font:normal 14px/14px 'Liberation Sans',sans-serif;color:#3c3c3c;transform:scaleX(0.93)">22</div></div>
<div style="position:absolute;left:70px;top:643px;width:40px;height:1px;background:#9b9b9b"></div>
<div style="position:absolute;left:70px;top:644px;width:40px;height:20px;overflow:hidden;background:#f9f9f9"><div style="position:absolute;left:0;width:40px;top:3.95px;text-align:center;font:normal 14px/14px 'Liberation Sans',sans-serif;color:#3c3c3c;transform:scaleX(0.93)">23</div></div>
<div style="position:absolute;left:70px;top:664px;width:40px;height:1px;background:#9b9b9b"></div>
<div style="position:absolute;left:70px;top:665px;width:40px;height:20px;overflow:hidden;background:#f9f9f9"><div style="position:absolute;left:0;width:40px;top:3.95px;text-align:center;font:normal 14px/14px 'Liberation Sans',sans-serif;color:#3c3c3c;transform:scaleX(0.93)">24</div></div>
<div style="position:absolute;left:70px;top:685px;width:40px;height:1px;background:#9b9b9b"></div>
<div style="position:absolute;left:70px;top:686px;width:40px;height:20px;overflow:hidden;background:#f9f9f9"><div style="position:absolute;left:0;width:40px;top:3.95px;text-align:center;font:normal 14px/14px 'Liberation Sans',sans-serif;color:#3c3c3c;transform:scaleX(0.93)">25</div></div>
<div style="position:absolute;left:70px;top:706px;width:40px;height:1px;background:#9b9b9b"></div>
<div style="position:absolute;left:70px;top:707px;width:40px;height:20px;overflow:hidden;background:#f9f9f9"><div style="position:absolute;left:0;width:40px;top:3.95px;text-align:center;font:normal 14px/14px 'Liberation Sans',sans-serif;color:#3c3c3c;transform:scaleX(0.93)">26</div></div>
<div style="position:absolute;left:70px;top:727px;width:40px;height:1px;background:#9b9b9b"></div>
<div style="position:absolute;left:70px;top:728px;width:40px;height:20px;overflow:hidden;background:#f9f9f9"><div style="position:absolute;left:0;width:40px;top:3.95px;text-align:center;font:normal 14px/14px 'Liberation Sans',sans-serif;color:#3c3c3c;transform:scaleX(0.93)">27</div></div>
<div style="position:absolute;left:70px;top:748px;width:40px;height:1px;background:#9b9b9b"></div>
<div style="position:absolute;left:70px;top:749px;width:40px;height:20px;overflow:hidden;background:#f9f9f9"><div style="position:absolute;left:0;width:40px;top:3.95px;text-align:center;font:normal 14px/14px 'Liberation Sans',sans-serif;color:#3c3c3c;transform:scaleX(0.93)">28</div></div>
<div style="position:absolute;left:70px;top:769px;width:40px;height:1px;background:#9b9b9b"></div>
<div style="position:absolute;left:70px;top:770px;width:40px;height:20px;overflow:hidden;background:#f9f9f9"><div style="position:absolute;left:0;width:40px;top:3.95px;text-align:center;font:normal 14px/14px 'Liberation Sans',sans-serif;color:#3c3c3c;transform:scaleX(0.93)">29</div></div>
<div style="position:absolute;left:70px;top:790px;width:40px;height:1px;background:#9b9b9b"></div>
<div style="position:absolute;left:70px;top:791px;width:40px;height:20px;overflow:hidden;background:#f9f9f9"><div style="position:absolute;left:0;width:40px;top:3.95px;text-align:center;font:normal 14px/14px 'Liberation Sans',sans-serif;color:#3c3c3c;transform:scaleX(0.93)">30</div></div>
<div style="position:absolute;left:70px;top:811px;width:40px;height:1px;background:#9b9b9b"></div>
<div style="position:absolute;left:70px;top:812px;width:40px;height:20px;overflow:hidden;background:#f9f9f9"><div style="position:absolute;left:0;width:40px;top:3.95px;text-align:center;font:normal 14px/14px 'Liberation Sans',sans-serif;color:#3c3c3c;transform:scaleX(0.93)">31</div></div>
<div style="position:absolute;left:70px;top:832px;width:40px;height:1px;background:#9b9b9b"></div>
<div style="position:absolute;left:70px;top:833px;width:40px;height:12px;overflow:hidden;background:#f9f9f9"><div style="position:absolute;left:0;width:40px;top:-0.05px;text-align:center;font:normal 14px/14px 'Liberation Sans',sans-serif;color:#3c3c3c;transform:scaleX(0.93)">32</div></div>
<div style="position:absolute;left:70px;top:845px;width:40px;height:1px;background:#9b9b9b"></div>
<div style="position:absolute;left:70px;top:846px;width:40px;height:12px;overflow:hidden;background:#f9f9f9"><div style="position:absolute;left:0;width:40px;top:-0.05px;text-align:center;font:normal 14px/14px 'Liberation Sans',sans-serif;color:#3c3c3c;transform:scaleX(0.93)">33</div></div>
<div style="position:absolute;left:70px;top:858px;width:40px;height:1px;background:#9b9b9b"></div>
<div style="position:absolute;left:70px;top:859px;width:40px;height:12px;overflow:hidden;background:#f9f9f9"><div style="position:absolute;left:0;width:40px;top:-0.05px;text-align:center;font:normal 14px/14px 'Liberation Sans',sans-serif;color:#3c3c3c;transform:scaleX(0.93)">34</div></div>
<div style="position:absolute;left:70px;top:871px;width:40px;height:1px;background:#9b9b9b"></div>
<div style="position:absolute;left:70px;top:872px;width:40px;height:12px;overflow:hidden;background:#f9f9f9"><div style="position:absolute;left:0;width:40px;top:-0.05px;text-align:center;font:normal 14px/14px 'Liberation Sans',sans-serif;color:#3c3c3c;transform:scaleX(0.93)">35</div></div>
<div style="position:absolute;left:70px;top:884px;width:40px;height:1px;background:#9b9b9b"></div>
<div style="position:absolute;left:70px;top:885px;width:40px;height:12px;overflow:hidden;background:#f9f9f9"><div style="position:absolute;left:0;width:40px;top:-0.05px;text-align:center;font:normal 14px/14px 'Liberation Sans',sans-serif;color:#3c3c3c;transform:scaleX(0.93)">36</div></div>
<div style="position:absolute;left:70px;top:897px;width:40px;height:1px;background:#9b9b9b"></div>
<div style="position:absolute;left:70px;top:898px;width:40px;height:12px;overflow:hidden;background:#f9f9f9"><div style="position:absolute;left:0;width:40px;top:-0.05px;text-align:center;font:normal 14px/14px 'Liberation Sans',sans-serif;color:#3c3c3c;transform:scaleX(0.93)">37</div></div>
<div style="position:absolute;left:70px;top:910px;width:40px;height:1px;background:#9b9b9b"></div>
<div style="position:absolute;left:70px;top:911px;width:40px;height:12px;overflow:hidden;background:#f9f9f9"><div style="position:absolute;left:0;width:40px;top:-0.05px;text-align:center;font:normal 14px/14px 'Liberation Sans',sans-serif;color:#3c3c3c;transform:scaleX(0.93)">38</div></div>
<div style="position:absolute;left:70px;top:923px;width:40px;height:1px;background:#9b9b9b"></div>
<div style="position:absolute;left:70px;top:924px;width:40px;height:12px;overflow:hidden;background:#f9f9f9"><div style="position:absolute;left:0;width:40px;top:-0.05px;text-align:center;font:normal 14px/14px 'Liberation Sans',sans-serif;color:#3c3c3c;transform:scaleX(0.93)">39</div></div>
<div style="position:absolute;left:70px;top:936px;width:40px;height:1px;background:#9b9b9b"></div>
<div style="position:absolute;left:70px;top:937px;width:40px;height:12px;overflow:hidden;background:#f9f9f9"><div style="position:absolute;left:0;width:40px;top:-0.05px;text-align:center;font:normal 14px/14px 'Liberation Sans',sans-serif;color:#3c3c3c;transform:scaleX(0.93)">40</div></div>
<div style="position:absolute;left:70px;top:949px;width:40px;height:1px;background:#9b9b9b"></div>
<div style="position:absolute;left:70px;top:950px;width:40px;height:12px;overflow:hidden;background:#f9f9f9"><div style="position:absolute;left:0;width:40px;top:-0.05px;text-align:center;font:normal 14px/14px 'Liberation Sans',sans-serif;color:#3c3c3c;transform:scaleX(0.93)">41</div></div>
<div style="position:absolute;left:70px;top:962px;width:40px;height:1px;background:#9b9b9b"></div>
<div style="position:absolute;left:70px;top:963px;width:40px;height:12px;overflow:hidden;background:#f9f9f9"><div style="position:absolute;left:0;width:40px;top:-0.05px;text-align:center;font:normal 14px/14px 'Liberation Sans',sans-serif;color:#3c3c3c;transform:scaleX(0.93)">42</div></div>
<div style="position:absolute;left:70px;top:975px;width:40px;height:1px;background:#9b9b9b"></div>
<div style="position:absolute;left:70px;top:976px;width:40px;height:10px;overflow:hidden;background:#f9f9f9"><div style="position:absolute;left:0;width:40px;top:-1.05px;text-align:center;font:normal 14px/14px 'Liberation Sans',sans-serif;color:#3c3c3c;transform:scaleX(0.93)">43</div></div>
<div style="position:absolute;left:110px;top:226px;width:1px;height:12px;background:#e95420"></div>
<div style="position:absolute;left:111px;top:226px;width:26px;height:13px;box-sizing:border-box;border-style:solid;border-color:#e8470f;border-width:1px 2px 2px 1px"></div>
<div style="position:absolute;left:134px;top:236px;width:5px;height:5px;background:#e95420"></div>
<div style="position:absolute;left:137.3px;top:264.64px;font:normal normal 12px/12px 'Liberation Sans',sans-serif;color:#000;letter-spacing:0.07px;white-space:nowrap;">SUBMITTED BY</div>
<div style="position:absolute;left:649.4px;top:264.64px;font:normal normal 12px/12px 'Liberation Sans',sans-serif;color:#000;letter-spacing:0.07px;white-space:nowrap;">SUBMITTED TO</div>
<div style="position:absolute;left:137px;top:277px;width:1433px;height:16px;background:#fff2cc"></div>
<div style="position:absolute;left:536px;top:277px;width:1035px;height:1px;background:#bfbfbf"></div>
<div style="position:absolute;left:136px;top:293px;width:1435px;height:1px;background:#bfbfbf"></div>
<div style="position:absolute;left:136px;top:309px;width:1435px;height:1px;background:#bfbfbf"></div>
<div style="position:absolute;left:136px;top:277px;width:1px;height:33px;background:#bfbfbf"></div>
<div style="position:absolute;left:236px;top:277px;width:1px;height:33px;background:#bfbfbf"></div>
<div style="position:absolute;left:336px;top:277px;width:1px;height:33px;background:#bfbfbf"></div>
<div style="position:absolute;left:436px;top:277px;width:1px;height:33px;background:#bfbfbf"></div>
<div style="position:absolute;left:536px;top:277px;width:1px;height:33px;background:#bfbfbf"></div>
<div style="position:absolute;left:648px;top:277px;width:1px;height:33px;background:#bfbfbf"></div>
<div style="position:absolute;left:1048px;top:277px;width:1px;height:33px;background:#bfbfbf"></div>
<div style="position:absolute;left:1470px;top:277px;width:1px;height:33px;background:#bfbfbf"></div>
<div style="position:absolute;left:1570px;top:277px;width:1px;height:33px;background:#bfbfbf"></div>
<div style="position:absolute;left:147.4px;top:281.38px;font:normal normal 9px/9px 'Liberation Sans',sans-serif;color:#000;letter-spacing:0px;white-space:nowrap;">NAME</div>
<div style="position:absolute;left:247.4px;top:281.38px;font:normal normal 9px/9px 'Liberation Sans',sans-serif;color:#000;letter-spacing:0px;white-space:nowrap;">TITLE</div>
<div style="position:absolute;left:347.3px;top:281.38px;font:normal normal 9px/9px 'Liberation Sans',sans-serif;color:#000;letter-spacing:0px;white-space:nowrap;">DEPARTMENT</div>
<div style="position:absolute;left:447.4px;top:281.38px;font:normal normal 9px/9px 'Liberation Sans',sans-serif;color:#000;letter-spacing:0px;white-space:nowrap;">PHONE</div>
<div style="position:absolute;left:547.4px;top:281.38px;font:normal normal 9px/9px 'Liberation Sans',sans-serif;color:#000;letter-spacing:0px;white-space:nowrap;">EMPLOYEE ID</div>
<div style="position:absolute;left:1481.3px;top:281.38px;font:normal normal 9px/9px 'Liberation Sans',sans-serif;color:#000;letter-spacing:0px;white-space:nowrap;">PHONE</div>
<div style="position:absolute;left:649px;width:399px;top:281.38px;text-align:center;font:normal normal 9px/9px 'Liberation Sans',sans-serif;color:#000;letter-spacing:0px;white-space:nowrap;">MANAGER</div>
<div style="position:absolute;left:1049px;width:421px;top:281.38px;text-align:center;font:normal normal 9px/9px 'Liberation Sans',sans-serif;color:#000;letter-spacing:0px;white-space:nowrap;">MANAGER TITLE</div>
<div style="position:absolute;left:136px;width:300px;top:357.84px;text-align:center;font:normal bold 12px/12px 'Liberation Sans',sans-serif;color:#7f6000;letter-spacing:0px;white-space:nowrap;transform:scaleX(1.187)">*Please use 3 letter code (ISO 4217) for</div>
<div style="position:absolute;left:136px;width:300px;top:371.84px;text-align:center;font:normal bold 12px/12px 'Liberation Sans',sans-serif;color:#7f6000;letter-spacing:0px;white-space:nowrap;transform:scaleX(1.184)">currency*</div>
<div style="position:absolute;left:536px;width:312px;top:364.24px;text-align:center;font:normal bold 12px/12px 'Liberation Sans',sans-serif;color:#7f6000;letter-spacing:0px;white-space:nowrap;transform:scaleX(1.11)">*DON&#8217;T FORGET TO ATTACH ALL RECEIPTS*</div>
<div style="position:absolute;left:137.2px;top:420.24px;font:normal normal 12px/12px 'Liberation Sans',sans-serif;color:#000;letter-spacing:0.1px;white-space:nowrap;">TRAVEL EXPENSE DETAILS</div>
<div style="position:absolute;left:237px;top:434px;width:1233px;height:20px;background:#1f4e78"></div>
<div style="position:absolute;left:236px;top:433px;width:1235px;height:1px;background:#bfbfbf"></div>
<div style="position:absolute;left:236px;top:454px;width:1235px;height:1px;background:#bfbfbf"></div>
<div style="position:absolute;left:236px;top:433px;width:1px;height:22px;background:#bfbfbf"></div>
<div style="position:absolute;left:237px;width:99px;top:438.64px;text-align:center;font:normal bold 10px/10px 'Liberation Sans',sans-serif;color:#fff;letter-spacing:0.08px;white-space:nowrap;">DATE</div>
<div style="position:absolute;left:336px;top:433px;width:1px;height:22px;background:#bfbfbf"></div>
<div style="position:absolute;left:337px;width:199px;top:438.64px;text-align:center;font:normal bold 10px/10px 'Liberation Sans',sans-serif;color:#fff;letter-spacing:0.08px;white-space:nowrap;">DESCRIPTION</div>
<div style="position:absolute;left:536px;top:433px;width:1px;height:22px;background:#bfbfbf"></div>
<div style="position:absolute;left:537px;width:111px;top:438.64px;text-align:center;font:normal bold 10px/10px 'Liberation Sans',sans-serif;color:#fff;letter-spacing:0.08px;white-space:nowrap;">PAYMENT METHOD</div>
<div style="position:absolute;left:648px;top:433px;width:1px;height:22px;background:#bfbfbf"></div>
<div style="position:absolute;left:649px;width:99px;top:438.64px;text-align:center;font:normal bold 10px/10px 'Liberation Sans',sans-serif;color:#fff;letter-spacing:0.08px;white-space:nowrap;">AMOUNT</div>
<div style="position:absolute;left:748px;top:433px;width:1px;height:22px;background:#bfbfbf"></div>
<div style="position:absolute;left:749px;width:99px;top:438.64px;text-align:center;font:normal bold 10px/10px 'Liberation Sans',sans-serif;color:#fff;letter-spacing:0.08px;white-space:nowrap;">CURRENCY</div>
<div style="position:absolute;left:848px;top:433px;width:1px;height:22px;background:#bfbfbf"></div>
<div style="position:absolute;left:849px;width:99px;top:438.64px;text-align:center;font:normal bold 10px/10px 'Liberation Sans',sans-serif;color:#fff;letter-spacing:0.08px;white-space:nowrap;">EXCHANGE RATE</div>
<div style="position:absolute;left:948px;top:433px;width:1px;height:22px;background:#bfbfbf"></div>
<div style="position:absolute;left:949px;width:99px;top:438.64px;text-align:center;font:normal bold 10px/10px 'Liberation Sans',sans-serif;color:#fff;letter-spacing:0.08px;white-space:nowrap;">SUBTOTAL ($)</div>
<div style="position:absolute;left:1048px;top:433px;width:1px;height:22px;background:#bfbfbf"></div>
<div style="position:absolute;left:1049px;width:135px;top:438.64px;text-align:center;font:normal bold 10px/10px 'Liberation Sans',sans-serif;color:#fff;letter-spacing:0.08px;white-space:nowrap;">CATEGORY COST ($)</div>
<div style="position:absolute;left:1184px;top:433px;width:1px;height:22px;background:#bfbfbf"></div>
<div style="position:absolute;left:1185px;width:285px;top:438.64px;text-align:center;font:normal bold 10px/10px 'Liberation Sans',sans-serif;color:#fff;letter-spacing:0.08px;white-space:nowrap;">COMMENTS</div>
<div style="position:absolute;left:1470px;top:433px;width:1px;height:22px;background:#bfbfbf"></div>
<div style="position:absolute;left:1049px;top:455px;width:135px;height:377px;background:#d9e1f2"></div>
<div style="position:absolute;left:236px;top:475px;width:813px;height:1px;background:#bfbfbf"></div>
<div style="position:absolute;left:1184px;top:475px;width:287px;height:1px;background:#bfbfbf"></div>
<div style="position:absolute;left:236px;top:496px;width:813px;height:1px;background:#bfbfbf"></div>
<div style="position:absolute;left:1184px;top:496px;width:287px;height:1px;background:#bfbfbf"></div>
<div style="position:absolute;left:236px;top:517px;width:813px;height:1px;background:#bfbfbf"></div>
<div style="position:absolute;left:1184px;top:517px;width:287px;height:1px;background:#bfbfbf"></div>
<div style="position:absolute;left:236px;top:538px;width:813px;height:1px;background:#bfbfbf"></div>
<div style="position:absolute;left:1184px;top:538px;width:287px;height:1px;background:#bfbfbf"></div>
<div style="position:absolute;left:236px;top:559px;width:813px;height:1px;background:#bfbfbf"></div>
<div style="position:absolute;left:1184px;top:559px;width:287px;height:1px;background:#bfbfbf"></div>
<div style="position:absolute;left:236px;top:580px;width:813px;height:1px;background:#bfbfbf"></div>
<div style="position:absolute;left:1184px;top:580px;width:287px;height:1px;background:#bfbfbf"></div>
<div style="position:absolute;left:236px;top:601px;width:813px;height:1px;background:#bfbfbf"></div>
<div style="position:absolute;left:1184px;top:601px;width:287px;height:1px;background:#bfbfbf"></div>
<div style="position:absolute;left:236px;top:622px;width:813px;height:1px;background:#bfbfbf"></div>
<div style="position:absolute;left:1184px;top:622px;width:287px;height:1px;background:#bfbfbf"></div>
<div style="position:absolute;left:236px;top:643px;width:813px;height:1px;background:#bfbfbf"></div>
<div style="position:absolute;left:1184px;top:643px;width:287px;height:1px;background:#bfbfbf"></div>
<div style="position:absolute;left:236px;top:664px;width:813px;height:1px;background:#bfbfbf"></div>
<div style="position:absolute;left:1184px;top:664px;width:287px;height:1px;background:#bfbfbf"></div>
<div style="position:absolute;left:236px;top:685px;width:813px;height:1px;background:#bfbfbf"></div>
<div style="position:absolute;left:1184px;top:685px;width:287px;height:1px;background:#bfbfbf"></div>
<div style="position:absolute;left:236px;top:706px;width:813px;height:1px;background:#bfbfbf"></div>
<div style="position:absolute;left:1184px;top:706px;width:287px;height:1px;background:#bfbfbf"></div>
<div style="position:absolute;left:236px;top:727px;width:813px;height:1px;background:#bfbfbf"></div>
<div style="position:absolute;left:1184px;top:727px;width:287px;height:1px;background:#bfbfbf"></div>
<div style="position:absolute;left:236px;top:748px;width:813px;height:1px;background:#bfbfbf"></div>
<div style="position:absolute;left:1184px;top:748px;width:287px;height:1px;background:#bfbfbf"></div>
<div style="position:absolute;left:236px;top:769px;width:813px;height:1px;background:#bfbfbf"></div>
<div style="position:absolute;left:1184px;top:769px;width:287px;height:1px;background:#bfbfbf"></div>
<div style="position:absolute;left:236px;top:790px;width:813px;height:1px;background:#bfbfbf"></div>
<div style="position:absolute;left:1184px;top:790px;width:287px;height:1px;background:#bfbfbf"></div>
<div style="position:absolute;left:236px;top:811px;width:813px;height:1px;background:#bfbfbf"></div>
<div style="position:absolute;left:1184px;top:811px;width:287px;height:1px;background:#bfbfbf"></div>
<div style="position:absolute;left:236px;top:454px;width:1px;height:358px;background:#bfbfbf"></div>
<div style="position:absolute;left:336px;top:454px;width:1px;height:358px;background:#bfbfbf"></div>
<div style="position:absolute;left:536px;top:454px;width:1px;height:358px;background:#bfbfbf"></div>
<div style="position:absolute;left:648px;top:454px;width:1px;height:358px;background:#bfbfbf"></div>
<div style="position:absolute;left:748px;top:454px;width:1px;height:358px;background:#bfbfbf"></div>
<div style="position:absolute;left:848px;top:454px;width:1px;height:358px;background:#bfbfbf"></div>
<div style="position:absolute;left:948px;top:454px;width:1px;height:358px;background:#bfbfbf"></div>
<div style="position:absolute;left:1048px;top:454px;width:1px;height:358px;background:#bfbfbf"></div>
<div style="position:absolute;left:1184px;top:454px;width:1px;height:358px;background:#bfbfbf"></div>
<div style="position:absolute;left:136px;top:455px;width:100px;height:41px;background:#1f4e78"></div>
<div style="position:absolute;left:1048px;top:496px;width:137px;height:1px;background:#bfbfbf"></div>
<div style="position:absolute;left:137px;top:496px;width:100px;height:1px;background:#bfbfbf"></div>
<div style="position:absolute;left:136px;width:100px;top:470.64px;text-align:center;font:normal bold 10px/10px 'Liberation Sans',sans-serif;color:#fff;letter-spacing:0.08px;white-space:nowrap;">AIRFARE</div>
<div style="position:absolute;left:136px;top:497px;width:100px;height:41px;background:#1f4e78"></div>
<div style="position:absolute;left:1048px;top:538px;width:137px;height:1px;background:#bfbfbf"></div>
<div style="position:absolute;left:137px;top:538px;width:100px;height:1px;background:#bfbfbf"></div>
<div style="position:absolute;left:136px;width:100px;top:512.63px;text-align:center;font:normal bold 10px/10px 'Liberation Sans',sans-serif;color:#fff;letter-spacing:0.08px;white-space:nowrap;">LODGING</div>
<div style="position:absolute;left:136px;top:539px;width:100px;height:83px;background:#1f4e78"></div>
<div style="position:absolute;left:1048px;top:622px;width:137px;height:1px;background:#bfbfbf"></div>
<div style="position:absolute;left:137px;top:622px;width:100px;height:1px;background:#bfbfbf"></div>
<div style="position:absolute;left:136px;width:100px;top:575.63px;text-align:center;font:normal bold 10px/10px 'Liberation Sans',sans-serif;color:#fff;letter-spacing:0.08px;white-space:nowrap;">MEALS</div>
<div style="position:absolute;left:136px;top:623px;width:100px;height:41px;background:#1f4e78"></div>
<div style="position:absolute;left:1048px;top:664px;width:137px;height:1px;background:#bfbfbf"></div>
<div style="position:absolute;left:137px;top:664px;width:100px;height:1px;background:#bfbfbf"></div>
<div style="position:absolute;left:136px;width:100px;top:638.63px;text-align:center;font:normal bold 10px/10px 'Liberation Sans',sans-serif;color:#fff;letter-spacing:0.08px;white-space:nowrap;">RENTAL VEHICLE</div>
<div style="position:absolute;left:136px;top:665px;width:100px;height:62px;background:#1f4e78"></div>
<div style="position:absolute;left:1048px;top:727px;width:137px;height:1px;background:#bfbfbf"></div>
<div style="position:absolute;left:137px;top:727px;width:100px;height:1px;background:#bfbfbf"></div>
<div style="position:absolute;left:136px;width:100px;top:691.13px;text-align:center;font:normal bold 10px/10px 'Liberation Sans',sans-serif;color:#fff;letter-spacing:0.08px;white-space:nowrap;">TRANSPORTATION</div>
<div style="position:absolute;left:137px;top:728px;width:99px;height:41px;background:#1f4e78"></div>
<div style="position:absolute;left:1048px;top:769px;width:137px;height:1px;background:#bfbfbf"></div>
<div style="position:absolute;left:137px;top:769px;width:100px;height:1px;background:#bfbfbf"></div>
<div style="position:absolute;left:136px;width:100px;top:743.63px;text-align:center;font:normal bold 10px/10px 'Liberation Sans',sans-serif;color:#fff;letter-spacing:0.08px;white-space:nowrap;">PARKING</div>
<div style="position:absolute;left:137px;top:770px;width:99px;height:41px;background:#1f4e78"></div>
<div style="position:absolute;left:1048px;top:811px;width:137px;height:1px;background:#bfbfbf"></div>
<div style="position:absolute;left:137px;top:811px;width:100px;height:1px;background:#bfbfbf"></div>
<div style="position:absolute;left:136px;width:100px;top:785.63px;text-align:center;font:normal bold 10px/10px 'Liberation Sans',sans-serif;color:#fff;letter-spacing:0.08px;white-space:nowrap;">OTHER</div>
<div style="position:absolute;left:137px;top:454px;width:100px;height:1px;background:#bfbfbf"></div>
<div style="position:absolute;left:136px;top:727px;width:1px;height:85px;background:#bfbfbf"></div>
<div style="position:absolute;left:136px;top:811px;width:1px;height:1px;background:#bfbfbf"></div>
<div style="position:absolute;left:700px;width:347.5px;top:816.74px;text-align:right;font:bold 10px/10px 'Liberation Sans',sans-serif;color:#000;white-space:nowrap">TOTAL TRAVEL EXPENSES REIMBURSEMENT ($)</div>
<div style="position:absolute;left:1048px;top:832px;width:137px;height:1px;background:#bfbfbf"></div>
<div style="position:absolute;left:1048px;top:811px;width:1px;height:22px;background:#bfbfbf"></div>
<div style="position:absolute;left:1184px;top:811px;width:1px;height:22px;background:#bfbfbf"></div>
<div style="position:absolute;left:1570px;top:833px;width:1px;height:12px;background:#a0a0a0"></div>
<div style="position:absolute;left:1597px;top:205px;width:12px;height:782px;background:#fafafa"></div>
<div style="position:absolute;left:1597px;top:206px;width:12px;height:5px;background:#b9b9b9"></div>
<div style="position:absolute;left:1600px;top:208px;width:6px;height:1.4px;background:#1a1a1a"></div>
<div style="position:absolute;left:1600px;top:216px;width:6px;height:372px;background:#8a8a8a;border-radius:3px"></div>
<div style="position:absolute;left:1610px;top:559px;width:6px;height:73px;background:#9b9b9b"></div>
<svg style="position:absolute;left:1610px;top:590px" width="6" height="10" viewBox="0 0 6 10"><path d="M0.5 1 L5 5 L0.5 9z" fill="#fafafa"/></svg>
<div style="position:absolute;left:70px;top:987px;width:1539px;height:37px;background:#fafafa"></div>
<div style="position:absolute;left:74px;top:990px;width:700px;height:6px;background:#8a8a8a;border-radius:3px"></div>
<div style="position:absolute;left:1592px;top:987px;width:5px;height:12px;background:#b9b9b9"></div>
<div style="position:absolute;left:1594px;top:990px;width:1.4px;height:6px;background:#111"></div>
<svg style="position:absolute;left:80px;top:1005px" width="17" height="12" viewBox="0 0 17 12"><rect x="0.5" y="0" width="1.4" height="12" fill="#f0906f"/><path d="M3 6 l4.5 -3.5 v2.6 h8.5 v1.8 h-8.5 v2.6z" fill="#f0906f"/></svg>
<svg style="position:absolute;left:105px;top:1005px" width="16" height="12" viewBox="0 0 16 12"><rect x="0" y="1.5" width="1.2" height="9" fill="#9a9a9a"/><path d="M1.5 6 l6.5 -4.5 v9z M8 6 l7 -4.5 v9z" fill="#9a9a9a"/></svg>
<svg style="position:absolute;left:131px;top:1005px" width="16" height="12" viewBox="0 0 16 12"><rect x="14.8" y="1.5" width="1.2" height="9" fill="#9a9a9a"/><path d="M14.5 6 l-6.5 -4.5 v9z M8 6 l-7 -4.5 v9z" fill="#9a9a9a"/></svg>
<svg style="position:absolute;left:155px;top:1005px" width="17" height="12" viewBox="0 0 17 12"><rect x="15.1" y="0" width="1.4" height="12" fill="#f0906f"/><path d="M14 6 l-4.5 -3.5 v2.6 h-8.5 v1.8 h8.5 v2.6z" fill="#f0906f"/></svg>
<svg style="position:absolute;left:186px;top:1002px" width="17" height="18" viewBox="0 0 17 18"><path d="M2 0.6 h8.5 l3.5 3.5 v11.4 a1.5 1.5 0 0 1 -1.5 1.5 h-10.5 a1.5 1.5 0 0 1 -1.5 -1.5 v-13.4 a1.5 1.5 0 0 1 1.5 -1.5z" fill="#fff" stroke="#3a3a3a" stroke-width="1"/><circle cx="12.5" cy="13.5" r="3.6" fill="#2a9a2a"/><path d="M12.5 11.5v4M10.5 13.5h4" stroke="#fff" stroke-width="1.2"/></svg>
<div style="position:absolute;left:213px;top:999px;width:181px;height:22px;background:#ffffff"></div>
<div style="position:absolute;left:213px;top:1021px;width:181px;height:3px;background:#2f6fc0"></div>
<div style="position:absolute;left:225.2px;top:1004.20px;font:normal bold 13px/13px 'Liberation Sans',sans-serif;color:#333;letter-spacing:-0.55px;white-space:nowrap;">Expense_Report_Travelling</div>
<div style="position:absolute;left:406.5px;top:1004.20px;font:normal normal 13px/13px 'Liberation Sans',sans-serif;color:#333;letter-spacing:-1.0px;white-space:nowrap;">Misc</div>
<div style="position:absolute;left:70px;top:1024px;width:1598px;height:1px;background:#c9c9c9"></div>
<div style="position:absolute;left:70px;top:1025px;width:1598px;height:20px;background:#fafafa"></div>
<div style="position:absolute;left:277px;top:1028px;width:1px;height:17px;background:#d6d6d6"></div>
<div style="position:absolute;left:484px;top:1028px;width:1px;height:17px;background:#d6d6d6"></div>
<div style="position:absolute;left:841px;top:1028px;width:1px;height:17px;background:#d6d6d6"></div>
<div style="position:absolute;left:1156px;top:1028px;width:1px;height:17px;background:#d6d6d6"></div>
<div style="position:absolute;left:1184px;top:1028px;width:1px;height:17px;background:#d6d6d6"></div>
<div style="position:absolute;left:1213px;top:1028px;width:1px;height:17px;background:#d6d6d6"></div>
<div style="position:absolute;left:1243px;top:1028px;width:1px;height:17px;background:#d6d6d6"></div>
<div style="position:absolute;left:1483px;top:1028px;width:1px;height:17px;background:#d6d6d6"></div>
<div style="position:absolute;left:1627px;top:1028px;width:1px;height:17px;background:#d6d6d6"></div>
<div style="position:absolute;left:80.2px;top:1028.60px;font:normal normal 13px/13px 'Liberation Sans',sans-serif;color:#333;letter-spacing:-0.35px;white-space:nowrap;">Sheet 1 of 2</div>
<div style="position:absolute;left:492.4px;top:1028.60px;font:normal normal 13px/13px 'Liberation Sans',sans-serif;color:#333;letter-spacing:-0.5px;white-space:nowrap;">PageStyle_Expense_Report_Travelling</div>
<div style="position:absolute;left:910.4px;top:1028.60px;font:normal normal 13px/13px 'Liberation Sans',sans-serif;color:#333;letter-spacing:-0.6px;white-space:nowrap;">English (Hong Kong)</div>
<svg style="position:absolute;left:1161px;top:1030px" width="19" height="11" viewBox="0 0 19 11"><rect x="0.6" y="2.6" width="8" height="5.8" fill="none" stroke="#e8541e" stroke-width="1.2"/><path d="M12 1.5 h4 M14 1.5 v8 M12 9.5 h4" stroke="#2a2a2a" stroke-width="1"/></svg>
<svg style="position:absolute;left:1195px;top:1029px" width="11" height="13" viewBox="0 0 11 13"><path d="M3.5 1 h4 v5 h2.5 l-4.5 5 l-4.5 -5 h2.5z" fill="#8cc43a" stroke="#3a6a10" stroke-width="0.8"/><rect x="0" y="12" width="11" height="1" fill="#3a6a10"/></svg>
<div style="position:absolute;left:1316.6px;top:1028.60px;font:normal normal 13px/13px 'Liberation Sans',sans-serif;color:#333;letter-spacing:-0.6px;white-space:nowrap;">Average: ; Sum: 0</div>
<div style="position:absolute;left:1494px;top:1035px;width:8px;height:2px;background:#555"></div>
<div style="position:absolute;left:1508px;top:1035px;width:97px;height:2px;background:#8e8e8e"></div>
<div style="position:absolute;left:1555px;top:1032px;width:1px;height:6px;background:#9a9a9a"></div>
<div style="position:absolute;left:1529px;top:1030.5px;width:9px;height:9px;box-sizing:border-box;border:1.2px solid #333;border-radius:50%;background:#fafafa"></div>
<div style="position:absolute;left:1611px;top:1035px;width:8px;height:2px;background:#555"></div>
<div style="position:absolute;left:1614px;top:1032px;width:2px;height:8px;background:#555"></div>
<div style="position:absolute;left:1633.7px;top:1028.60px;font:normal normal 13px/13px 'Liberation Sans',sans-serif;color:#333;letter-spacing:-0.3px;white-space:nowrap;">65%</div>
</body></html>
